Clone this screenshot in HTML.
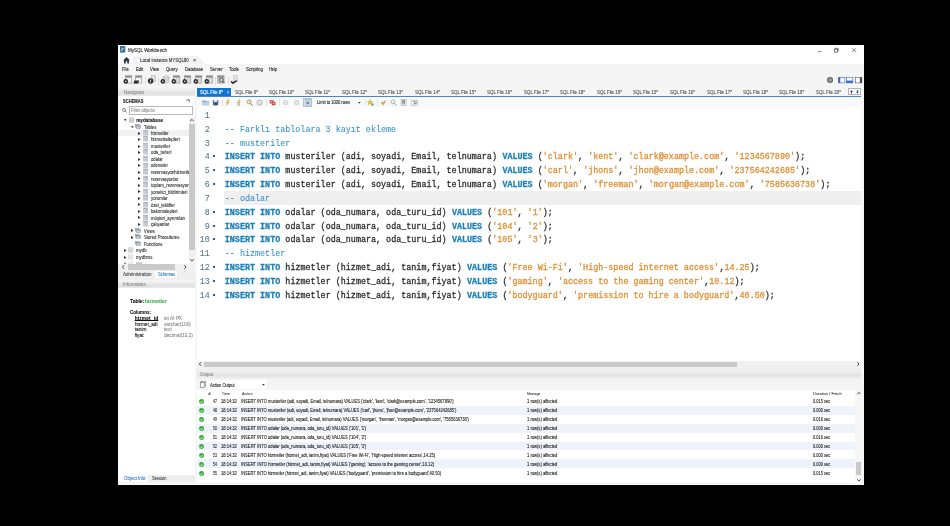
<!DOCTYPE html>
<html lang="tr"><head><meta charset="utf-8"><title>MySQL Workbench</title>
<style>
html,body{margin:0;padding:0;background:#000;width:950px;height:526px;overflow:hidden}
#win{position:absolute;left:118.3px;top:45px;width:745.80px;height:439.8px;background:#f4f4f4;transform:scaleX(1.0);transform-origin:0 0;overflow:hidden;font-family:"Liberation Sans",sans-serif;will-change:transform}
#win div,#win svg,#win span.t{position:absolute}
#win span.t{white-space:pre;display:block}
#win svg{overflow:visible}
</style></head><body>
<div id="win">
<div style="left:-0.30px;top:0.00px;width:746.00px;height:10.00px;background:#fff;"></div>
<svg style="left:1.60px;top:1.20px;width:5.30px;height:6.60px" viewBox="0 0 10 12" preserveAspectRatio="none"><rect x="0" y="0" width="10" height="12" fill="#3b7397"/><path d="M2 9 C3 3 7 2 8.5 5 C6.5 4 4.5 5.5 4 9 Z" fill="#cfe3ef"/></svg>
<span class="t" style="left:9.70px;top:2.78px;font-size:4.87px;line-height:5.84px;color:#1a1a1a;-webkit-text-stroke:0.1px;transform:scaleX(0.9296);transform-origin:0 50%;">MySQL Workbench</span>
<svg style="left:699.50px;top:5.70px;width:3.40px;height:0.70px" viewBox="0 0 3.4 0.7" preserveAspectRatio="none"><rect width="3.4" height="0.7" fill="#666"/></svg>
<svg style="left:715.90px;top:3.40px;width:4.40px;height:4.40px" viewBox="0 0 4.4 4.4" preserveAspectRatio="none"><rect x="0.3" y="1.1" width="3.1" height="3.1" fill="none" stroke="#333" stroke-width="0.6"/><path d="M1.2 1.1V0.3H4.1V3.3H3.4" fill="none" stroke="#333" stroke-width="0.6"/></svg>
<svg style="left:734.30px;top:3.40px;width:4.20px;height:4.40px" viewBox="0 0 4.2 4.4" preserveAspectRatio="none"><path d="M0.2 0.2L4 4.2M4 0.2L0.2 4.2" stroke="#333" stroke-width="0.6" fill="none"/></svg>
<div style="left:-0.30px;top:10.00px;width:746.00px;height:9.30px;background:#fff;"></div>
<svg style="left:15.20px;top:10.80px;width:73.00px;height:8.50px" viewBox="0 0 73 8.5" preserveAspectRatio="none"><path d="M0 8.5V0H64.5L73 8.5Z" fill="#f2f2f2"/></svg>
<svg style="left:4.90px;top:11.80px;width:7.00px;height:6.40px" viewBox="0 0 7 6.4" preserveAspectRatio="none"><path d="M0 3.3L3.5 0L7 3.3H6V6.4H4.2V4.2H2.8V6.4H1V3.3Z" fill="#2b3d5c"/></svg>
<span class="t" style="left:21.60px;top:12.78px;font-size:4.7px;line-height:5.64px;color:#333;-webkit-text-stroke:0.1px;transform:scaleX(0.9201);transform-origin:0 50%;">Local instance MYSQL80</span>
<span class="t" style="left:75.10px;top:12.37px;font-size:5.21px;line-height:6.25px;color:#555;-webkit-text-stroke:0.1px;">×</span>
<div style="left:-0.30px;top:19.30px;width:746.00px;height:23.70px;background:#f5f5f5;"></div>
<span class="t" style="left:3.60px;top:22.38px;font-size:4.7px;line-height:5.64px;color:#222;-webkit-text-stroke:0.1px;transform:scaleX(0.9111);transform-origin:0 50%;">File</span>
<span class="t" style="left:17.60px;top:22.38px;font-size:4.7px;line-height:5.64px;color:#222;-webkit-text-stroke:0.1px;transform:scaleX(0.9013);transform-origin:0 50%;">Edit</span>
<span class="t" style="left:31.90px;top:22.38px;font-size:4.7px;line-height:5.64px;color:#222;-webkit-text-stroke:0.1px;transform:scaleX(0.9106);transform-origin:0 50%;">View</span>
<span class="t" style="left:47.50px;top:22.38px;font-size:4.7px;line-height:5.64px;color:#222;-webkit-text-stroke:0.1px;transform:scaleX(0.9063);transform-origin:0 50%;">Query</span>
<span class="t" style="left:66.50px;top:22.38px;font-size:4.7px;line-height:5.64px;color:#222;-webkit-text-stroke:0.1px;transform:scaleX(0.9046);transform-origin:0 50%;">Database</span>
<span class="t" style="left:91.60px;top:22.38px;font-size:4.7px;line-height:5.64px;color:#222;-webkit-text-stroke:0.1px;transform:scaleX(0.9102);transform-origin:0 50%;">Server</span>
<span class="t" style="left:111.20px;top:22.38px;font-size:4.7px;line-height:5.64px;color:#222;-webkit-text-stroke:0.1px;transform:scaleX(0.9114);transform-origin:0 50%;">Tools</span>
<span class="t" style="left:128.10px;top:22.38px;font-size:4.7px;line-height:5.64px;color:#222;-webkit-text-stroke:0.1px;transform:scaleX(0.9296);transform-origin:0 50%;">Scripting</span>
<span class="t" style="left:151.40px;top:22.38px;font-size:4.7px;line-height:5.64px;color:#222;-webkit-text-stroke:0.1px;transform:scaleX(0.8483);transform-origin:0 50%;">Help</span>
<svg style="left:4.50px;top:30.40px;width:10.00px;height:10.00px" viewBox="0 0 10 10" preserveAspectRatio="none"><rect x="2.4" y="0.8" width="6.4" height="7.3" fill="#f4f4f4" stroke="#8a8a8a" stroke-width="0.6"/><rect x="2.4" y="0.8" width="6.4" height="1.9" fill="#8f8f8f"/><circle cx="2.8" cy="6.4" r="2.3" fill="#2c2c2c"/><circle cx="2.8" cy="6.4" r="0.8" fill="#d8d8d8"/></svg>
<svg style="left:15.10px;top:30.40px;width:10.00px;height:10.00px" viewBox="0 0 10 10" preserveAspectRatio="none"><rect x="2.4" y="0.8" width="6.4" height="7.3" fill="#f4f4f4" stroke="#8a8a8a" stroke-width="0.6"/><rect x="2.4" y="0.8" width="6.4" height="1.9" fill="#8f8f8f"/><path d="M0.4 8.4L1.4 5.4H6.2L5 8.4Z" fill="#2e2e2e"/></svg>
<svg style="left:28.70px;top:30.40px;width:10.00px;height:10.00px" viewBox="0 0 10 10" preserveAspectRatio="none"><rect x="4" y="0.6" width="4.6" height="6.4" fill="#dcdcdc" stroke="#b5b5b5" stroke-width="0.5"/><circle cx="3.6" cy="6" r="2.7" fill="#2a2a2a"/><path d="M3.9 4.4L3.2 7.6" stroke="#f0f0f0" stroke-width="0.9"/></svg>
<svg style="left:42.10px;top:30.40px;width:10.00px;height:10.00px" viewBox="0 0 10 10" preserveAspectRatio="none"><path d="M3 2V7C3 8.2 8.8 8.2 8.8 7V2Z" fill="#e3e3e3" stroke="#9a9a9a" stroke-width="0.5"/><ellipse cx="5.9" cy="2" rx="2.9" ry="1.1" fill="#f1f1f1" stroke="#9a9a9a" stroke-width="0.5"/><path d="M3 4.4C3 5.5 8.8 5.5 8.8 4.4" fill="none" stroke="#aaa" stroke-width="0.5"/><circle cx="2.8" cy="6.4" r="2.3" fill="#2c2c2c"/><circle cx="2.8" cy="6.4" r="0.8" fill="#d8d8d8"/></svg>
<svg style="left:53.20px;top:30.40px;width:10.00px;height:10.00px" viewBox="0 0 10 10" preserveAspectRatio="none"><rect x="2.4" y="0.8" width="6.4" height="7.3" fill="#f4f4f4" stroke="#8a8a8a" stroke-width="0.6"/><rect x="2.4" y="0.8" width="6.4" height="1.9" fill="#8f8f8f"/><path d="M5.6 2.7V8.1M7.2 2.7V8.1" stroke="#a8a8a8" stroke-width="0.6"/><circle cx="2.8" cy="6.4" r="2.3" fill="#2c2c2c"/><circle cx="2.8" cy="6.4" r="0.8" fill="#d8d8d8"/></svg>
<svg style="left:64.00px;top:30.40px;width:10.00px;height:10.00px" viewBox="0 0 10 10" preserveAspectRatio="none"><rect x="2.4" y="0.8" width="6.4" height="7.3" fill="#f4f4f4" stroke="#8a8a8a" stroke-width="0.6"/><rect x="2.4" y="0.8" width="6.4" height="1.9" fill="#8f8f8f"/><path d="M5.6 2.7V8.1M7.2 2.7V8.1" stroke="#a8a8a8" stroke-width="0.6"/><circle cx="2.8" cy="6.4" r="2.3" fill="#2c2c2c"/><circle cx="2.8" cy="6.4" r="0.8" fill="#d8d8d8"/></svg>
<svg style="left:74.80px;top:30.40px;width:10.00px;height:10.00px" viewBox="0 0 10 10" preserveAspectRatio="none"><rect x="2.4" y="0.8" width="6.4" height="7.3" fill="#f4f4f4" stroke="#8a8a8a" stroke-width="0.6"/><rect x="2.4" y="0.8" width="6.4" height="1.9" fill="#8f8f8f"/><path d="M5.6 2.7V8.1M7.2 2.7V8.1" stroke="#a8a8a8" stroke-width="0.6"/><circle cx="2.8" cy="6.4" r="2.3" fill="#2c2c2c"/><circle cx="2.8" cy="6.4" r="0.8" fill="#d8d8d8"/></svg>
<svg style="left:85.70px;top:30.40px;width:10.00px;height:10.00px" viewBox="0 0 10 10" preserveAspectRatio="none"><rect x="2.4" y="0.8" width="6.4" height="7.3" fill="#f4f4f4" stroke="#8a8a8a" stroke-width="0.6"/><rect x="2.4" y="0.8" width="6.4" height="1.9" fill="#8f8f8f"/><path d="M5.6 2.7V8.1M7.2 2.7V8.1" stroke="#a8a8a8" stroke-width="0.6"/><circle cx="2.8" cy="6.4" r="2.3" fill="#2c2c2c"/><circle cx="2.8" cy="6.4" r="0.8" fill="#d8d8d8"/></svg>
<svg style="left:99.30px;top:30.40px;width:10.00px;height:10.00px" viewBox="0 0 10 10" preserveAspectRatio="none"><rect x="0.7" y="0.8" width="6.4" height="7.3" fill="#b9b9b9" stroke="#8a8a8a" stroke-width="0.5"/><rect x="0.7" y="0.8" width="6.4" height="1.7" fill="#8c8c8c"/><circle cx="4.4" cy="5" r="1.7" fill="#efefef" stroke="#3a3a3a" stroke-width="0.8"/><path d="M5.6 6.2L7.4 8" stroke="#3a3a3a" stroke-width="1"/></svg>
<svg style="left:112.30px;top:30.40px;width:10.00px;height:10.00px" viewBox="0 0 10 10" preserveAspectRatio="none"><rect x="3.4" y="0.6" width="4.2" height="6" fill="#e2e2e2" stroke="#bcbcbc" stroke-width="0.5"/><path d="M1 6.4L3 8.2L6.8 5.6" stroke="#333" stroke-width="1.6" fill="none"/></svg>
<div style="left:27.00px;top:32.00px;width:0.60px;height:7.50px;background:#dcdcdc;"></div>
<div style="left:40.30px;top:32.00px;width:0.60px;height:7.50px;background:#dcdcdc;"></div>
<div style="left:97.00px;top:32.00px;width:0.60px;height:7.50px;background:#dcdcdc;"></div>
<div style="left:109.90px;top:32.00px;width:0.60px;height:7.50px;background:#dcdcdc;"></div>
<svg style="left:709.10px;top:32.00px;width:6.00px;height:6.00px" viewBox="0 0 6 6" preserveAspectRatio="none"><circle cx="3" cy="3" r="3" fill="#575757"/><circle cx="3" cy="3" r="1.5" fill="none" stroke="#d0d0d0" stroke-width="0.6"/><path d="M3 0.6V5.4M0.6 3H5.4" stroke="#d0d0d0" stroke-width="0.4"/></svg>
<svg style="left:720.10px;top:32.00px;width:7.20px;height:6.20px" viewBox="0 0 7.2 6.2" preserveAspectRatio="none"><rect x="0.3" y="0.3" width="6.6" height="5.6" fill="#fff" stroke="#3a66c4" stroke-width="0.6"/><rect x="0.3" y="0.3" width="2" height="5.6" fill="#3a66c4"/></svg>
<svg style="left:728.30px;top:32.00px;width:7.20px;height:6.20px" viewBox="0 0 7.2 6.2" preserveAspectRatio="none"><rect x="0.3" y="0.3" width="6.6" height="5.6" fill="#fff" stroke="#3a66c4" stroke-width="0.6"/><rect x="0.3" y="3.6" width="6.6" height="2.3" fill="#3a66c4"/></svg>
<svg style="left:736.50px;top:32.00px;width:7.20px;height:6.20px" viewBox="0 0 7.2 6.2" preserveAspectRatio="none"><rect x="0.3" y="0.3" width="6.6" height="5.6" fill="#fff" stroke="#555" stroke-width="0.6"/><rect x="4.9" y="0.3" width="2" height="5.6" fill="#444"/></svg>
<div style="left:-0.30px;top:43.00px;width:77.30px;height:8.60px;background:linear-gradient(#f4f4f4,#e2e2e2 55%,#e2e2e2 70%,#f4f4f4);"></div>
<span class="t" style="left:5.80px;top:44.78px;font-size:4.7px;line-height:5.64px;color:#8c8c8c;-webkit-text-stroke:0.1px;letter-spacing:0.043px;">Navigator</span>
<div style="left:-0.30px;top:51.00px;width:77.30px;height:174.60px;background:#fff;"></div>
<span class="t" style="left:4.90px;top:54.18px;font-size:4.54px;line-height:5.45px;color:#1a1a1a;font-weight:700;-webkit-text-stroke:0.1px;transform:scaleX(0.9030);transform-origin:0 50%;">SCHEMAS</span>
<svg style="left:67.90px;top:54.20px;width:4.40px;height:3.80px" viewBox="0 0 5.5 4.6" preserveAspectRatio="none"><path d="M0.6 2.6A2 1.7 0 1 1 3.2 4" fill="none" stroke="#555" stroke-width="0.7"/><path d="M2.4 0.6L4.8 1L3.6 2.6Z" fill="#555"/></svg>
<svg style="left:3.70px;top:63.00px;width:5.00px;height:4.60px" viewBox="0 0 5 4.6" preserveAspectRatio="none"><circle cx="2" cy="1.9" r="1.5" fill="none" stroke="#555" stroke-width="0.7"/><path d="M3 3L4.6 4.4" stroke="#555" stroke-width="0.8"/></svg>
<div style="left:11.00px;top:61.00px;width:63.70px;height:8.60px;background:#fff;box-sizing:border-box;border:1px solid #b9b9b9;"></div>
<span class="t" style="left:12.90px;top:63.08px;font-size:4.54px;line-height:5.45px;color:#8e8e8e;-webkit-text-stroke:0.1px;transform:scaleX(0.9248);transform-origin:0 50%;">Filter objects</span>
<div style="left:-0.30px;top:84.90px;width:71.20px;height:6.50px;background:#f1f1f1;"></div>
<svg style="left:5.60px;top:74.30px;width:2.60px;height:2.20px" viewBox="0 0 2.6 2.2" preserveAspectRatio="none"><path d="M0 0H2.6L1.3 2.2Z" fill="#444"/></svg>
<svg style="left:10.70px;top:72.20px;width:5.20px;height:6.00px" viewBox="0 0 5.2 6" preserveAspectRatio="none"><g opacity="1.0"><path d="M0.3 1.2V4.8C0.3 5.7 4.9 5.7 4.9 4.8V1.2Z" fill="#d6d6d6" stroke="#b0b0b0" stroke-width="0.5"/><ellipse cx="2.6" cy="1.2" rx="2.3" ry="0.9" fill="#ececec" stroke="#b0b0b0" stroke-width="0.5"/><path d="M0.3 3C0.3 3.9 4.9 3.9 4.9 3" fill="none" stroke="#bbb" stroke-width="0.4"/></g></svg>
<span class="t" style="left:18.20px;top:72.93px;font-size:4.62px;line-height:5.54px;color:#111;font-weight:700;-webkit-text-stroke:0.1px;letter-spacing:0.029px;">mydatabase</span>
<svg style="left:13.10px;top:80.70px;width:2.60px;height:2.20px" viewBox="0 0 2.6 2.2" preserveAspectRatio="none"><path d="M0 0H2.6L1.3 2.2Z" fill="#444"/></svg>
<svg style="left:16.90px;top:78.60px;width:6.00px;height:5.40px" viewBox="0 0 6 5.4" preserveAspectRatio="none"><rect x="0.3" y="0.3" width="3.8" height="2.8" fill="#c3c8d0" stroke="#7f8792" stroke-width="0.5"/><rect x="1.6" y="1.5" width="4.1" height="3" fill="#dfe3e8" stroke="#7f8792" stroke-width="0.5"/><path d="M1.6 2.5H5.7M3 1.5V4.5M4.4 1.5V4.5" stroke="#8d95a0" stroke-width="0.4"/></svg>
<span class="t" style="left:25.90px;top:79.53px;font-size:4.45px;line-height:5.34px;color:#333;-webkit-text-stroke:0.1px;transform:scaleX(0.9640);transform-origin:0 50%;">Tables</span>
<svg style="left:20.10px;top:86.50px;width:2.60px;height:3.00px" viewBox="0 0 2.6 3" preserveAspectRatio="none"><path d="M0 0L2.6 1.5L0 3Z" fill="#333"/></svg>
<svg style="left:25.00px;top:84.90px;width:5.20px;height:5.80px" viewBox="0 0 5.2 5.8" preserveAspectRatio="none"><rect x="0.2" y="0.2" width="4.8" height="5.4" fill="#cfd2db"/><rect x="0.2" y="0.2" width="4.8" height="1.3" fill="#a9adba"/><path d="M0.2 2.6H5M0.2 3.7H5M0.2 4.8H5" stroke="#b3b6c2" stroke-width="0.45"/><path d="M1.9 1.5V5.6" stroke="#e3e5ea" stroke-width="0.4"/></svg>
<span class="t" style="left:32.90px;top:85.83px;font-size:4.45px;line-height:5.34px;color:#333;-webkit-text-stroke:0.1px;transform:scaleX(0.9749);transform-origin:0 50%;">hizmetler</span>
<svg style="left:20.10px;top:93.03px;width:2.60px;height:3.00px" viewBox="0 0 2.6 3" preserveAspectRatio="none"><path d="M0 0L2.6 1.5L0 3Z" fill="#333"/></svg>
<svg style="left:25.00px;top:91.43px;width:5.20px;height:5.80px" viewBox="0 0 5.2 5.8" preserveAspectRatio="none"><rect x="0.2" y="0.2" width="4.8" height="5.4" fill="#cfd2db"/><rect x="0.2" y="0.2" width="4.8" height="1.3" fill="#a9adba"/><path d="M0.2 2.6H5M0.2 3.7H5M0.2 4.8H5" stroke="#b3b6c2" stroke-width="0.45"/><path d="M1.9 1.5V5.6" stroke="#e3e5ea" stroke-width="0.4"/></svg>
<span class="t" style="left:32.90px;top:92.36px;font-size:4.45px;line-height:5.34px;color:#333;-webkit-text-stroke:0.1px;letter-spacing:0.014px;">hizmettalepleri</span>
<svg style="left:20.10px;top:99.56px;width:2.60px;height:3.00px" viewBox="0 0 2.6 3" preserveAspectRatio="none"><path d="M0 0L2.6 1.5L0 3Z" fill="#333"/></svg>
<svg style="left:25.00px;top:97.96px;width:5.20px;height:5.80px" viewBox="0 0 5.2 5.8" preserveAspectRatio="none"><rect x="0.2" y="0.2" width="4.8" height="5.4" fill="#cfd2db"/><rect x="0.2" y="0.2" width="4.8" height="1.3" fill="#a9adba"/><path d="M0.2 2.6H5M0.2 3.7H5M0.2 4.8H5" stroke="#b3b6c2" stroke-width="0.45"/><path d="M1.9 1.5V5.6" stroke="#e3e5ea" stroke-width="0.4"/></svg>
<span class="t" style="left:32.90px;top:98.89px;font-size:4.45px;line-height:5.34px;color:#333;-webkit-text-stroke:0.1px;transform:scaleX(0.9829);transform-origin:0 50%;">musteriler</span>
<svg style="left:20.10px;top:106.09px;width:2.60px;height:3.00px" viewBox="0 0 2.6 3" preserveAspectRatio="none"><path d="M0 0L2.6 1.5L0 3Z" fill="#333"/></svg>
<svg style="left:25.00px;top:104.49px;width:5.20px;height:5.80px" viewBox="0 0 5.2 5.8" preserveAspectRatio="none"><rect x="0.2" y="0.2" width="4.8" height="5.4" fill="#cfd2db"/><rect x="0.2" y="0.2" width="4.8" height="1.3" fill="#a9adba"/><path d="M0.2 2.6H5M0.2 3.7H5M0.2 4.8H5" stroke="#b3b6c2" stroke-width="0.45"/><path d="M1.9 1.5V5.6" stroke="#e3e5ea" stroke-width="0.4"/></svg>
<span class="t" style="left:32.90px;top:105.42px;font-size:4.45px;line-height:5.34px;color:#333;-webkit-text-stroke:0.1px;transform:scaleX(0.9702);transform-origin:0 50%;">oda_turleri</span>
<svg style="left:20.10px;top:112.62px;width:2.60px;height:3.00px" viewBox="0 0 2.6 3" preserveAspectRatio="none"><path d="M0 0L2.6 1.5L0 3Z" fill="#333"/></svg>
<svg style="left:25.00px;top:111.02px;width:5.20px;height:5.80px" viewBox="0 0 5.2 5.8" preserveAspectRatio="none"><rect x="0.2" y="0.2" width="4.8" height="5.4" fill="#cfd2db"/><rect x="0.2" y="0.2" width="4.8" height="1.3" fill="#a9adba"/><path d="M0.2 2.6H5M0.2 3.7H5M0.2 4.8H5" stroke="#b3b6c2" stroke-width="0.45"/><path d="M1.9 1.5V5.6" stroke="#e3e5ea" stroke-width="0.4"/></svg>
<span class="t" style="left:32.90px;top:111.95px;font-size:4.45px;line-height:5.34px;color:#333;-webkit-text-stroke:0.1px;transform:scaleX(0.9539);transform-origin:0 50%;">odalar</span>
<svg style="left:20.10px;top:119.15px;width:2.60px;height:3.00px" viewBox="0 0 2.6 3" preserveAspectRatio="none"><path d="M0 0L2.6 1.5L0 3Z" fill="#333"/></svg>
<svg style="left:25.00px;top:117.55px;width:5.20px;height:5.80px" viewBox="0 0 5.2 5.8" preserveAspectRatio="none"><rect x="0.2" y="0.2" width="4.8" height="5.4" fill="#cfd2db"/><rect x="0.2" y="0.2" width="4.8" height="1.3" fill="#a9adba"/><path d="M0.2 2.6H5M0.2 3.7H5M0.2 4.8H5" stroke="#b3b6c2" stroke-width="0.45"/><path d="M1.9 1.5V5.6" stroke="#e3e5ea" stroke-width="0.4"/></svg>
<span class="t" style="left:32.90px;top:118.48px;font-size:4.45px;line-height:5.34px;color:#333;-webkit-text-stroke:0.1px;transform:scaleX(0.9163);transform-origin:0 50%;">odemeler</span>
<svg style="left:20.10px;top:125.68px;width:2.60px;height:3.00px" viewBox="0 0 2.6 3" preserveAspectRatio="none"><path d="M0 0L2.6 1.5L0 3Z" fill="#333"/></svg>
<svg style="left:25.00px;top:124.08px;width:5.20px;height:5.80px" viewBox="0 0 5.2 5.8" preserveAspectRatio="none"><rect x="0.2" y="0.2" width="4.8" height="5.4" fill="#cfd2db"/><rect x="0.2" y="0.2" width="4.8" height="1.3" fill="#a9adba"/><path d="M0.2 2.6H5M0.2 3.7H5M0.2 4.8H5" stroke="#b3b6c2" stroke-width="0.45"/><path d="M1.9 1.5V5.6" stroke="#e3e5ea" stroke-width="0.4"/></svg>
<span class="t" style="left:32.90px;top:125.01px;font-size:4.45px;line-height:5.34px;color:#333;-webkit-text-stroke:0.1px;transform:scaleX(0.9635);transform-origin:0 50%;">rezervasyonhizmetleri</span>
<svg style="left:20.10px;top:132.21px;width:2.60px;height:3.00px" viewBox="0 0 2.6 3" preserveAspectRatio="none"><path d="M0 0L2.6 1.5L0 3Z" fill="#333"/></svg>
<svg style="left:25.00px;top:130.61px;width:5.20px;height:5.80px" viewBox="0 0 5.2 5.8" preserveAspectRatio="none"><rect x="0.2" y="0.2" width="4.8" height="5.4" fill="#cfd2db"/><rect x="0.2" y="0.2" width="4.8" height="1.3" fill="#a9adba"/><path d="M0.2 2.6H5M0.2 3.7H5M0.2 4.8H5" stroke="#b3b6c2" stroke-width="0.45"/><path d="M1.9 1.5V5.6" stroke="#e3e5ea" stroke-width="0.4"/></svg>
<span class="t" style="left:32.90px;top:131.54px;font-size:4.45px;line-height:5.34px;color:#333;-webkit-text-stroke:0.1px;transform:scaleX(0.9320);transform-origin:0 50%;">rezervasyonlar</span>
<svg style="left:20.10px;top:138.74px;width:2.60px;height:3.00px" viewBox="0 0 2.6 3" preserveAspectRatio="none"><path d="M0 0L2.6 1.5L0 3Z" fill="#333"/></svg>
<svg style="left:25.00px;top:137.14px;width:5.20px;height:5.80px" viewBox="0 0 5.2 5.8" preserveAspectRatio="none"><rect x="0.2" y="0.2" width="4.8" height="5.4" fill="#cfd2db"/><rect x="0.2" y="0.2" width="4.8" height="1.3" fill="#a9adba"/><path d="M0.2 2.6H5M0.2 3.7H5M0.2 4.8H5" stroke="#b3b6c2" stroke-width="0.45"/><path d="M1.9 1.5V5.6" stroke="#e3e5ea" stroke-width="0.4"/></svg>
<span class="t" style="left:32.90px;top:138.07px;font-size:4.45px;line-height:5.34px;color:#333;-webkit-text-stroke:0.1px;transform:scaleX(0.9641);transform-origin:0 50%;">toplam_rezervasyonlar</span>
<svg style="left:20.10px;top:145.27px;width:2.60px;height:3.00px" viewBox="0 0 2.6 3" preserveAspectRatio="none"><path d="M0 0L2.6 1.5L0 3Z" fill="#333"/></svg>
<svg style="left:25.00px;top:143.67px;width:5.20px;height:5.80px" viewBox="0 0 5.2 5.8" preserveAspectRatio="none"><rect x="0.2" y="0.2" width="4.8" height="5.4" fill="#cfd2db"/><rect x="0.2" y="0.2" width="4.8" height="1.3" fill="#a9adba"/><path d="M0.2 2.6H5M0.2 3.7H5M0.2 4.8H5" stroke="#b3b6c2" stroke-width="0.45"/><path d="M1.9 1.5V5.6" stroke="#e3e5ea" stroke-width="0.4"/></svg>
<span class="t" style="left:32.90px;top:144.60px;font-size:4.45px;line-height:5.34px;color:#333;-webkit-text-stroke:0.1px;transform:scaleX(0.9736);transform-origin:0 50%;">yonetici_bildirimleri</span>
<svg style="left:20.10px;top:151.80px;width:2.60px;height:3.00px" viewBox="0 0 2.6 3" preserveAspectRatio="none"><path d="M0 0L2.6 1.5L0 3Z" fill="#333"/></svg>
<svg style="left:25.00px;top:150.20px;width:5.20px;height:5.80px" viewBox="0 0 5.2 5.8" preserveAspectRatio="none"><rect x="0.2" y="0.2" width="4.8" height="5.4" fill="#cfd2db"/><rect x="0.2" y="0.2" width="4.8" height="1.3" fill="#a9adba"/><path d="M0.2 2.6H5M0.2 3.7H5M0.2 4.8H5" stroke="#b3b6c2" stroke-width="0.45"/><path d="M1.9 1.5V5.6" stroke="#e3e5ea" stroke-width="0.4"/></svg>
<span class="t" style="left:32.90px;top:151.13px;font-size:4.45px;line-height:5.34px;color:#333;-webkit-text-stroke:0.1px;transform:scaleX(0.9590);transform-origin:0 50%;">yorumlar</span>
<svg style="left:20.10px;top:158.33px;width:2.60px;height:3.00px" viewBox="0 0 2.6 3" preserveAspectRatio="none"><path d="M0 0L2.6 1.5L0 3Z" fill="#333"/></svg>
<svg style="left:25.00px;top:156.73px;width:5.20px;height:5.80px" viewBox="0 0 5.2 5.8" preserveAspectRatio="none"><rect x="0.2" y="0.2" width="4.8" height="5.4" fill="#cfd2db"/><rect x="0.2" y="0.2" width="4.8" height="1.3" fill="#a9adba"/><path d="M0.2 2.6H5M0.2 3.7H5M0.2 4.8H5" stroke="#b3b6c2" stroke-width="0.45"/><path d="M1.9 1.5V5.6" stroke="#e3e5ea" stroke-width="0.4"/></svg>
<span class="t" style="left:32.90px;top:157.66px;font-size:4.45px;line-height:5.34px;color:#333;-webkit-text-stroke:0.1px;transform:scaleX(0.9703);transform-origin:0 50%;">özel_teklifler</span>
<svg style="left:20.10px;top:164.86px;width:2.60px;height:3.00px" viewBox="0 0 2.6 3" preserveAspectRatio="none"><path d="M0 0L2.6 1.5L0 3Z" fill="#333"/></svg>
<svg style="left:25.00px;top:163.26px;width:5.20px;height:5.80px" viewBox="0 0 5.2 5.8" preserveAspectRatio="none"><rect x="0.2" y="0.2" width="4.8" height="5.4" fill="#cfd2db"/><rect x="0.2" y="0.2" width="4.8" height="1.3" fill="#a9adba"/><path d="M0.2 2.6H5M0.2 3.7H5M0.2 4.8H5" stroke="#b3b6c2" stroke-width="0.45"/><path d="M1.9 1.5V5.6" stroke="#e3e5ea" stroke-width="0.4"/></svg>
<span class="t" style="left:32.90px;top:164.19px;font-size:4.45px;line-height:5.34px;color:#333;-webkit-text-stroke:0.1px;transform:scaleX(0.9602);transform-origin:0 50%;">bakımtalepleri</span>
<svg style="left:20.10px;top:171.39px;width:2.60px;height:3.00px" viewBox="0 0 2.6 3" preserveAspectRatio="none"><path d="M0 0L2.6 1.5L0 3Z" fill="#333"/></svg>
<svg style="left:25.00px;top:169.79px;width:5.20px;height:5.80px" viewBox="0 0 5.2 5.8" preserveAspectRatio="none"><rect x="0.2" y="0.2" width="4.8" height="5.4" fill="#cfd2db"/><rect x="0.2" y="0.2" width="4.8" height="1.3" fill="#a9adba"/><path d="M0.2 2.6H5M0.2 3.7H5M0.2 4.8H5" stroke="#b3b6c2" stroke-width="0.45"/><path d="M1.9 1.5V5.6" stroke="#e3e5ea" stroke-width="0.4"/></svg>
<span class="t" style="left:32.90px;top:170.72px;font-size:4.45px;line-height:5.34px;color:#333;-webkit-text-stroke:0.1px;transform:scaleX(0.9604);transform-origin:0 50%;">müşteri_ayrıntıları</span>
<svg style="left:20.10px;top:177.92px;width:2.60px;height:3.00px" viewBox="0 0 2.6 3" preserveAspectRatio="none"><path d="M0 0L2.6 1.5L0 3Z" fill="#333"/></svg>
<svg style="left:25.00px;top:176.32px;width:5.20px;height:5.80px" viewBox="0 0 5.2 5.8" preserveAspectRatio="none"><rect x="0.2" y="0.2" width="4.8" height="5.4" fill="#cfd2db"/><rect x="0.2" y="0.2" width="4.8" height="1.3" fill="#a9adba"/><path d="M0.2 2.6H5M0.2 3.7H5M0.2 4.8H5" stroke="#b3b6c2" stroke-width="0.45"/><path d="M1.9 1.5V5.6" stroke="#e3e5ea" stroke-width="0.4"/></svg>
<span class="t" style="left:32.90px;top:177.25px;font-size:4.45px;line-height:5.34px;color:#333;-webkit-text-stroke:0.1px;transform:scaleX(0.9556);transform-origin:0 50%;">çalışanlar</span>
<svg style="left:13.10px;top:184.40px;width:2.60px;height:3.00px" viewBox="0 0 2.6 3" preserveAspectRatio="none"><path d="M0 0L2.6 1.5L0 3Z" fill="#333"/></svg>
<svg style="left:16.50px;top:182.70px;width:6.00px;height:5.40px" viewBox="0 0 6 5.4" preserveAspectRatio="none"><rect x="0.3" y="0.3" width="3.8" height="2.8" fill="#c3c8d0" stroke="#7f8792" stroke-width="0.5"/><rect x="1.6" y="1.5" width="4.1" height="3" fill="#dfe3e8" stroke="#7f8792" stroke-width="0.5"/><path d="M1.6 2.5H5.7M3 1.5V4.5M4.4 1.5V4.5" stroke="#8d95a0" stroke-width="0.4"/></svg>
<span class="t" style="left:25.90px;top:183.73px;font-size:4.45px;line-height:5.34px;color:#333;-webkit-text-stroke:0.1px;transform:scaleX(0.9160);transform-origin:0 50%;">Views</span>
<svg style="left:13.10px;top:190.90px;width:2.60px;height:3.00px" viewBox="0 0 2.6 3" preserveAspectRatio="none"><path d="M0 0L2.6 1.5L0 3Z" fill="#333"/></svg>
<svg style="left:16.50px;top:189.20px;width:6.00px;height:5.40px" viewBox="0 0 6 5.4" preserveAspectRatio="none"><rect x="0.3" y="0.3" width="3.8" height="2.8" fill="#c3c8d0" stroke="#7f8792" stroke-width="0.5"/><rect x="1.6" y="1.5" width="4.1" height="3" fill="#dfe3e8" stroke="#7f8792" stroke-width="0.5"/><path d="M1.6 2.5H5.7M3 1.5V4.5M4.4 1.5V4.5" stroke="#8d95a0" stroke-width="0.4"/></svg>
<span class="t" style="left:25.90px;top:190.23px;font-size:4.45px;line-height:5.34px;color:#333;-webkit-text-stroke:0.1px;transform:scaleX(0.9540);transform-origin:0 50%;">Stored Procedures</span>
<svg style="left:16.50px;top:195.70px;width:6.00px;height:5.40px" viewBox="0 0 6 5.4" preserveAspectRatio="none"><rect x="0.3" y="0.3" width="3.8" height="2.8" fill="#c3c8d0" stroke="#7f8792" stroke-width="0.5"/><rect x="1.6" y="1.5" width="4.1" height="3" fill="#dfe3e8" stroke="#7f8792" stroke-width="0.5"/><path d="M1.6 2.5H5.7M3 1.5V4.5M4.4 1.5V4.5" stroke="#8d95a0" stroke-width="0.4"/></svg>
<span class="t" style="left:25.90px;top:196.73px;font-size:4.45px;line-height:5.34px;color:#333;-webkit-text-stroke:0.1px;transform:scaleX(0.9537);transform-origin:0 50%;">Functions</span>
<svg style="left:5.50px;top:204.00px;width:2.60px;height:3.00px" viewBox="0 0 2.6 3" preserveAspectRatio="none"><path d="M0 0L2.6 1.5L0 3Z" fill="#333"/></svg>
<svg style="left:10.30px;top:202.20px;width:5.20px;height:6.00px" viewBox="0 0 5.2 6" preserveAspectRatio="none"><g opacity="0.8"><path d="M0.3 1.2V4.8C0.3 5.7 4.9 5.7 4.9 4.8V1.2Z" fill="#d6d6d6" stroke="#b0b0b0" stroke-width="0.5"/><ellipse cx="2.6" cy="1.2" rx="2.3" ry="0.9" fill="#ececec" stroke="#b0b0b0" stroke-width="0.5"/><path d="M0.3 3C0.3 3.9 4.9 3.9 4.9 3" fill="none" stroke="#bbb" stroke-width="0.4"/></g></svg>
<span class="t" style="left:18.20px;top:203.33px;font-size:4.45px;line-height:5.34px;color:#333;-webkit-text-stroke:0.1px;transform:scaleX(0.9741);transform-origin:0 50%;">mydb</span>
<svg style="left:5.50px;top:210.50px;width:2.60px;height:3.00px" viewBox="0 0 2.6 3" preserveAspectRatio="none"><path d="M0 0L2.6 1.5L0 3Z" fill="#333"/></svg>
<svg style="left:10.30px;top:208.80px;width:5.20px;height:6.00px" viewBox="0 0 5.2 6" preserveAspectRatio="none"><g opacity="0.55"><path d="M0.3 1.2V4.8C0.3 5.7 4.9 5.7 4.9 4.8V1.2Z" fill="#d6d6d6" stroke="#b0b0b0" stroke-width="0.5"/><ellipse cx="2.6" cy="1.2" rx="2.3" ry="0.9" fill="#ececec" stroke="#b0b0b0" stroke-width="0.5"/><path d="M0.3 3C0.3 3.9 4.9 3.9 4.9 3" fill="none" stroke="#bbb" stroke-width="0.4"/></g></svg>
<span class="t" style="left:18.20px;top:209.83px;font-size:4.45px;line-height:5.34px;color:#333;-webkit-text-stroke:0.1px;transform:scaleX(0.9754);transform-origin:0 50%;">mydbms</span>
<svg style="left:5.50px;top:216.90px;width:2.60px;height:3.00px" viewBox="0 0 2.6 3" preserveAspectRatio="none"><path d="M0 0L2.6 1.5L0 3Z" fill="#888"/></svg>
<svg style="left:10.30px;top:215.60px;width:5.20px;height:6.00px" viewBox="0 0 5.2 6" preserveAspectRatio="none"><g opacity="0.4"><path d="M0.3 1.2V4.8C0.3 5.7 4.9 5.7 4.9 4.8V1.2Z" fill="#d6d6d6" stroke="#b0b0b0" stroke-width="0.5"/><ellipse cx="2.6" cy="1.2" rx="2.3" ry="0.9" fill="#ececec" stroke="#b0b0b0" stroke-width="0.5"/><path d="M0.3 3C0.3 3.9 4.9 3.9 4.9 3" fill="none" stroke="#bbb" stroke-width="0.4"/></g></svg>
<span class="t" style="left:18.20px;top:216.43px;font-size:4.45px;line-height:5.34px;color:#999;-webkit-text-stroke:0.1px;transform:scaleX(0.9588);transform-origin:0 50%;">sys</span>
<div style="left:70.90px;top:72.00px;width:6.10px;height:147.00px;background:#f0f0f0;"></div>
<div style="left:71.20px;top:79.00px;width:5.40px;height:126.30px;background:#c9c9c9;"></div>
<svg style="left:71.70px;top:74.20px;width:4.00px;height:2.40px" viewBox="0 0 4 2.4" preserveAspectRatio="none"><path d="M0.2 2.2L2 0.4L3.8 2.2" fill="none" stroke="#2a2a2a" stroke-width="0.85"/></svg>
<svg style="left:71.70px;top:213.60px;width:4.00px;height:2.40px" viewBox="0 0 4 2.4" preserveAspectRatio="none"><path d="M0.2 0.3L2 2.1L3.8 0.3" fill="none" stroke="#2a2a2a" stroke-width="0.85"/></svg>
<div style="left:-0.30px;top:219.00px;width:77.30px;height:6.60px;background:#f0f0f0;"></div>
<div style="left:9.50px;top:219.30px;width:47.70px;height:5.50px;background:#c9c9c9;"></div>
<svg style="left:4.30px;top:220.00px;width:2.40px;height:4.00px" viewBox="0 0 2.4 4" preserveAspectRatio="none"><path d="M2 0.2L0.4 2L2 3.8" fill="none" stroke="#2a2a2a" stroke-width="0.85"/></svg>
<svg style="left:65.90px;top:220.00px;width:2.40px;height:4.00px" viewBox="0 0 2.4 4" preserveAspectRatio="none"><path d="M0.4 0.2L2 2L0.4 3.8" fill="none" stroke="#2a2a2a" stroke-width="0.85"/></svg>
<div style="left:-0.30px;top:225.60px;width:77.30px;height:9.90px;background:#efefef;"></div>
<div style="left:37.20px;top:225.60px;width:22.30px;height:7.00px;background:#fff;"></div>
<span class="t" style="left:5.40px;top:226.68px;font-size:4.7px;line-height:5.64px;color:#4a4a4a;-webkit-text-stroke:0.1px;transform:scaleX(0.9637);transform-origin:0 50%;">Administration</span>
<span class="t" style="left:39.90px;top:226.68px;font-size:4.7px;line-height:5.64px;color:#2f7fd0;-webkit-text-stroke:0.1px;transform:scaleX(0.8779);transform-origin:0 50%;">Schemas</span>
<div style="left:-0.30px;top:235.50px;width:77.30px;height:8.10px;background:linear-gradient(#f4f4f4,#e2e2e2 55%,#e2e2e2 70%,#f4f4f4);"></div>
<span class="t" style="left:5.40px;top:237.28px;font-size:4.7px;line-height:5.64px;color:#8c8c8c;-webkit-text-stroke:0.1px;transform:scaleX(0.9782);transform-origin:0 50%;">Information</span>
<div style="left:-0.30px;top:243.30px;width:77.30px;height:187.00px;background:#fff;"></div>
<span class="t" style="left:11.60px;top:254.12px;font-size:4.96px;line-height:5.95px;color:#111;font-weight:700;-webkit-text-stroke:0.1px;transform:scaleX(0.9973);transform-origin:0 50%;">Table:</span>
<span class="t" style="left:26.90px;top:254.12px;font-size:4.96px;line-height:5.95px;color:#3fae4a;font-weight:700;-webkit-text-stroke:0.1px;transform:scaleX(0.9920);transform-origin:0 50%;">hizmetler</span>
<span class="t" style="left:11.60px;top:265.42px;font-size:4.96px;line-height:5.95px;color:#111;font-weight:700;-webkit-text-stroke:0.1px;transform:scaleX(0.9182);transform-origin:0 50%;">Columns:</span>
<span class="t" style="left:16.70px;top:271.23px;font-size:4.79px;line-height:5.75px;color:#111;font-weight:700;-webkit-text-stroke:0.1px;letter-spacing:0.168px;text-decoration:underline;text-decoration-thickness:0.6px;text-underline-offset:0.3px;">hizmet_id</span>
<span class="t" style="left:45.70px;top:271.23px;font-size:4.79px;line-height:5.75px;color:#8a8a8a;-webkit-text-stroke:0.1px;letter-spacing:0.036px;">int AI PK</span>
<span class="t" style="left:16.70px;top:276.70px;font-size:4.79px;line-height:5.75px;color:#111;-webkit-text-stroke:0.1px;transform:scaleX(0.9713);transform-origin:0 50%;">hizmet_adi</span>
<span class="t" style="left:45.70px;top:276.70px;font-size:4.79px;line-height:5.75px;color:#8a8a8a;-webkit-text-stroke:0.1px;transform:scaleX(0.9906);transform-origin:0 50%;">varchar(100)</span>
<span class="t" style="left:16.70px;top:282.17px;font-size:4.79px;line-height:5.75px;color:#111;-webkit-text-stroke:0.1px;letter-spacing:0.017px;">tanim</span>
<span class="t" style="left:45.70px;top:282.17px;font-size:4.79px;line-height:5.75px;color:#8a8a8a;-webkit-text-stroke:0.1px;letter-spacing:0.170px;">text</span>
<span class="t" style="left:16.70px;top:287.64px;font-size:4.79px;line-height:5.75px;color:#111;-webkit-text-stroke:0.1px;letter-spacing:0.003px;">fiyat</span>
<span class="t" style="left:45.70px;top:287.64px;font-size:4.79px;line-height:5.75px;color:#8a8a8a;-webkit-text-stroke:0.1px;transform:scaleX(0.9993);transform-origin:0 50%;">decimal(10,2)</span>
<div style="left:-0.30px;top:430.30px;width:77.30px;height:7.70px;background:#efefef;"></div>
<div style="left:-0.30px;top:438.00px;width:77.30px;height:2.00px;background:#fafafa;"></div>
<div style="left:-0.30px;top:430.30px;width:30.00px;height:6.90px;background:#fff;"></div>
<span class="t" style="left:5.60px;top:431.38px;font-size:4.7px;line-height:5.64px;color:#2f7fd0;-webkit-text-stroke:0.1px;transform:scaleX(0.9503);transform-origin:0 50%;">Object Info</span>
<span class="t" style="left:33.60px;top:431.38px;font-size:4.7px;line-height:5.64px;color:#444;-webkit-text-stroke:0.1px;transform:scaleX(0.8791);transform-origin:0 50%;">Session</span>
<div style="left:77.00px;top:43.00px;width:1.90px;height:397.00px;background:#f6f6f6;"></div>
<div style="left:78.90px;top:43.00px;width:666.80px;height:8.00px;background:#f5f5f5;"></div>
<div style="left:78.90px;top:50.70px;width:663.80px;height:1.00px;background:#4687cb;"></div>
<div style="left:79.10px;top:43.00px;width:34.20px;height:8.30px;background:#0f74d1;"></div>
<span class="t" style="left:81.50px;top:44.78px;font-size:4.7px;line-height:5.64px;color:#fff;-webkit-text-stroke:0.1px;transform:scaleX(0.9640);transform-origin:0 50%;">SQL File 8*</span>
<span class="t" style="left:108.70px;top:44.68px;font-size:4.7px;line-height:5.64px;color:#9cc8f2;-webkit-text-stroke:0.1px;">×</span>
<span class="t" style="left:116.90px;top:44.78px;font-size:4.7px;line-height:5.64px;color:#505050;-webkit-text-stroke:0.1px;transform:scaleX(0.9640);transform-origin:0 50%;">SQL File 9*</span>
<span class="t" style="left:151.00px;top:44.78px;font-size:4.7px;line-height:5.64px;color:#505050;-webkit-text-stroke:0.1px;transform:scaleX(0.9444);transform-origin:0 50%;">SQL File 10*</span>
<span class="t" style="left:186.80px;top:44.78px;font-size:4.7px;line-height:5.64px;color:#505050;-webkit-text-stroke:0.1px;transform:scaleX(0.9570);transform-origin:0 50%;">SQL File 11*</span>
<span class="t" style="left:223.70px;top:44.78px;font-size:4.7px;line-height:5.64px;color:#505050;-webkit-text-stroke:0.1px;transform:scaleX(0.9444);transform-origin:0 50%;">SQL File 12*</span>
<span class="t" style="left:260.10px;top:44.78px;font-size:4.7px;line-height:5.64px;color:#505050;-webkit-text-stroke:0.1px;transform:scaleX(0.9444);transform-origin:0 50%;">SQL File 13*</span>
<span class="t" style="left:296.50px;top:44.78px;font-size:4.7px;line-height:5.64px;color:#505050;-webkit-text-stroke:0.1px;transform:scaleX(0.9444);transform-origin:0 50%;">SQL File 14*</span>
<span class="t" style="left:332.70px;top:44.78px;font-size:4.7px;line-height:5.64px;color:#505050;-webkit-text-stroke:0.1px;transform:scaleX(0.9444);transform-origin:0 50%;">SQL File 15*</span>
<span class="t" style="left:369.30px;top:44.78px;font-size:4.7px;line-height:5.64px;color:#505050;-webkit-text-stroke:0.1px;transform:scaleX(0.9444);transform-origin:0 50%;">SQL File 16*</span>
<span class="t" style="left:405.70px;top:44.78px;font-size:4.7px;line-height:5.64px;color:#505050;-webkit-text-stroke:0.1px;transform:scaleX(0.9444);transform-origin:0 50%;">SQL File 17*</span>
<span class="t" style="left:442.30px;top:44.78px;font-size:4.7px;line-height:5.64px;color:#505050;-webkit-text-stroke:0.1px;transform:scaleX(0.9444);transform-origin:0 50%;">SQL File 18*</span>
<span class="t" style="left:479.00px;top:44.78px;font-size:4.7px;line-height:5.64px;color:#505050;-webkit-text-stroke:0.1px;transform:scaleX(0.9444);transform-origin:0 50%;">SQL File 19*</span>
<span class="t" style="left:515.20px;top:44.78px;font-size:4.7px;line-height:5.64px;color:#505050;-webkit-text-stroke:0.1px;transform:scaleX(0.9444);transform-origin:0 50%;">SQL File 15*</span>
<span class="t" style="left:551.60px;top:44.78px;font-size:4.7px;line-height:5.64px;color:#505050;-webkit-text-stroke:0.1px;transform:scaleX(0.9444);transform-origin:0 50%;">SQL File 16*</span>
<span class="t" style="left:588.50px;top:44.78px;font-size:4.7px;line-height:5.64px;color:#505050;-webkit-text-stroke:0.1px;transform:scaleX(0.9444);transform-origin:0 50%;">SQL File 17*</span>
<span class="t" style="left:624.90px;top:44.78px;font-size:4.7px;line-height:5.64px;color:#505050;-webkit-text-stroke:0.1px;transform:scaleX(0.9444);transform-origin:0 50%;">SQL File 18*</span>
<span class="t" style="left:661.30px;top:44.78px;font-size:4.7px;line-height:5.64px;color:#505050;-webkit-text-stroke:0.1px;transform:scaleX(0.9444);transform-origin:0 50%;">SQL File 19*</span>
<span class="t" style="left:697.90px;top:44.78px;font-size:4.7px;line-height:5.64px;color:#505050;-webkit-text-stroke:0.1px;transform:scaleX(0.9444);transform-origin:0 50%;">SQL File 20*</span>
<div style="left:729.50px;top:43.20px;width:13.40px;height:6.60px;background:#fff;box-sizing:border-box;border:0.6px solid #b5b5b5;"></div>
<svg style="left:731.90px;top:44.60px;width:3.00px;height:3.80px" viewBox="0 0 3 3.8" preserveAspectRatio="none"><path d="M1.5 0L3 2H2V3.8H1V2H0Z" fill="#555"/></svg>
<svg style="left:737.50px;top:44.60px;width:3.00px;height:3.80px" viewBox="0 0 3 3.8" preserveAspectRatio="none"><path d="M1.5 3.8L3 1.8H2V0H1V1.8H0Z" fill="#2b4fd0"/></svg>
<div style="left:78.90px;top:51.60px;width:663.80px;height:10.60px;background:#f9f9f9;"></div>
<svg style="left:83.80px;top:53.70px;width:7.20px;height:7.20px" viewBox="0 0 8 8" preserveAspectRatio="none"><path d="M0.6 1.6H3.2L3.9 2.4H7.4V6.8H0.6Z" fill="#8eb0d2" stroke="#7a9fc4" stroke-width="0.3"/><path d="M0.6 3.4H7.4V6.8H0.6Z" fill="#b4cfe9"/></svg>
<svg style="left:94.10px;top:53.70px;width:7.20px;height:7.20px" viewBox="0 0 8 8" preserveAspectRatio="none"><rect x="1" y="1" width="6" height="6" rx="0.5" fill="#566d8c"/><rect x="2.2" y="1" width="3.6" height="2.3" fill="#dfe7f0"/><rect x="2.4" y="4.6" width="3.2" height="2.4" fill="#3c5273"/></svg>
<svg style="left:106.30px;top:53.70px;width:7.20px;height:7.20px" viewBox="0 0 8 8" preserveAspectRatio="none"><path d="M4.8 0.4L2 4.2H3.8L2.6 7.6L6.2 3.2H4.3L5.8 0.4Z" fill="#e3c160" stroke="#b9964a" stroke-width="0.3"/></svg>
<svg style="left:117.10px;top:53.70px;width:7.20px;height:7.20px" viewBox="0 0 8 8" preserveAspectRatio="none"><path d="M4.8 0.4L2 4.2H3.8L2.6 7.6L6.2 3.2H4.3L5.8 0.4Z" fill="#e3c160" stroke="#b9964a" stroke-width="0.3"/><path d="M4.6 5.2V7.6" stroke="#666" stroke-width="0.7"/></svg>
<svg style="left:127.80px;top:53.70px;width:7.20px;height:7.20px" viewBox="0 0 8 8" preserveAspectRatio="none"><circle cx="3.6" cy="3.2" r="2.3" fill="#f3ecd2" stroke="#8b7a4a" stroke-width="0.7"/><path d="M5.2 5L7.2 7.4" stroke="#6d5f3a" stroke-width="1"/><path d="M3.9 1.6L2.8 3.4H3.7L3.2 4.8L4.6 3H3.8Z" fill="#d9a520"/></svg>
<svg style="left:138.10px;top:53.70px;width:7.20px;height:7.20px" viewBox="0 0 8 8" preserveAspectRatio="none"><circle cx="4" cy="4" r="3" fill="#e4e2e0" stroke="#a9a5a2" stroke-width="0.8"/></svg>
<svg style="left:151.10px;top:53.70px;width:7.20px;height:7.20px" viewBox="0 0 8 8" preserveAspectRatio="none"><rect x="0.8" y="1" width="4.4" height="4" rx="0.8" fill="#d2584e"/><rect x="3" y="3" width="4.2" height="4" rx="0.8" fill="#c8443a"/><circle cx="3" cy="3" r="0.9" fill="#f6d6d2"/><circle cx="5.2" cy="5" r="0.9" fill="#f6d6d2"/></svg>
<svg style="left:163.80px;top:53.70px;width:7.20px;height:7.20px" viewBox="0 0 8 8" preserveAspectRatio="none"><circle cx="4" cy="4" r="3" fill="#d6d6d6"/><circle cx="4" cy="4" r="1.4" fill="#ececec"/></svg>
<svg style="left:174.50px;top:53.70px;width:7.20px;height:7.20px" viewBox="0 0 8 8" preserveAspectRatio="none"><circle cx="4" cy="4" r="3" fill="#d6d6d6"/><circle cx="4" cy="4" r="1.4" fill="#ececec"/></svg>
<div style="left:184.90px;top:52.60px;width:8.80px;height:9.00px;background:#d6e6f7;box-sizing:border-box;border:0.5px solid #9fc3ea;"></div>
<svg style="left:185.70px;top:53.70px;width:7.20px;height:7.20px" viewBox="0 0 8 8" preserveAspectRatio="none"><rect x="1.4" y="0.8" width="5.2" height="6.4" fill="#f4f1df" stroke="#8a8f9c" stroke-width="0.5"/><circle cx="4.2" cy="4.4" r="1.6" fill="#5b86c4"/><path d="M2.2 2H5.8" stroke="#b7a24a" stroke-width="0.6"/></svg>
<div style="left:103.70px;top:53.60px;width:0.50px;height:7.20px;background:#e6e6e6;"></div>
<div style="left:148.30px;top:53.60px;width:0.50px;height:7.20px;background:#e6e6e6;"></div>
<div style="left:161.10px;top:53.60px;width:0.50px;height:7.20px;background:#e6e6e6;"></div>
<div style="left:246.50px;top:53.60px;width:0.50px;height:7.20px;background:#e6e6e6;"></div>
<div style="left:259.30px;top:53.60px;width:0.50px;height:7.20px;background:#e6e6e6;"></div>
<div style="left:196.30px;top:53.20px;width:48.80px;height:8.00px;background:#fbfbfb;"></div>
<span class="t" style="left:198.70px;top:55.08px;font-size:4.54px;line-height:5.45px;color:#222;-webkit-text-stroke:0.1px;transform:scaleX(0.8957);transform-origin:0 50%;">Limit to 1000 rows</span>
<svg style="left:240.30px;top:56.50px;width:2.80px;height:1.80px" viewBox="0 0 2.8 1.8" preserveAspectRatio="none"><path d="M0 0H2.8L1.4 1.8Z" fill="#444"/></svg>
<svg style="left:249.10px;top:53.70px;width:7.20px;height:7.20px" viewBox="0 0 8 8" preserveAspectRatio="none"><path d="M3.4 0.6L4.3 2.6L6.4 2.8L4.8 4.2L5.3 6.4L3.4 5.2L1.5 6.4L2 4.2L0.4 2.8L2.5 2.6Z" fill="#e9c13c" stroke="#b8922a" stroke-width="0.3"/><circle cx="6" cy="6" r="1.4" fill="#6fae4c"/></svg>
<svg style="left:261.50px;top:53.70px;width:7.20px;height:7.20px" viewBox="0 0 8 8" preserveAspectRatio="none"><path d="M7.2 1L3.6 3.6L4.6 4.8Z" fill="#a3702e"/><path d="M0.8 4.2L3.6 3.2L5 4.8L3.4 7Z" fill="#e3b23c" stroke="#a8801f" stroke-width="0.3"/></svg>
<svg style="left:271.80px;top:53.70px;width:7.20px;height:7.20px" viewBox="0 0 8 8" preserveAspectRatio="none"><circle cx="3.3" cy="3.1" r="2.2" fill="#f2f4f7" stroke="#8d939c" stroke-width="0.7"/><path d="M4.9 4.8L7 7.2" stroke="#8d939c" stroke-width="1"/></svg>
<svg style="left:282.30px;top:53.70px;width:7.20px;height:7.20px" viewBox="0 0 8 8" preserveAspectRatio="none"><rect x="1.2" y="0.8" width="5.6" height="6.4" fill="#f6f6f6" stroke="#8a8a8a" stroke-width="0.5"/><path d="M3.2 2V6M4.8 2V6M2.6 2H5.4" stroke="#333" stroke-width="0.7" fill="none"/></svg>
<svg style="left:292.80px;top:53.70px;width:7.20px;height:7.20px" viewBox="0 0 8 8" preserveAspectRatio="none"><rect x="1" y="1.2" width="6" height="5.6" fill="#f6f6f6" stroke="#8a8a8a" stroke-width="0.5"/><path d="M2.2 3H5.8V5H3.6M4.4 4.2L3.4 5L4.4 5.8" stroke="#444" stroke-width="0.55" fill="none"/></svg>
<div style="left:78.90px;top:62.20px;width:663.80px;height:254.00px;background:#fff;"></div>
<div style="left:106.10px;top:146.20px;width:636.60px;height:13.50px;background:#efefef;"></div>
<span class="t" style="left:86.85px;top:65.87px;font-size:8.39px;line-height:10.07px;color:#4f7688;font-family:'Liberation Mono',monospace;-webkit-text-stroke:0.26px;letter-spacing:0.012px;-webkit-text-stroke:0.05px;">1</span>
<span class="t" style="left:86.85px;top:79.70px;font-size:8.39px;line-height:10.07px;color:#4f7688;font-family:'Liberation Mono',monospace;-webkit-text-stroke:0.26px;letter-spacing:0.012px;-webkit-text-stroke:0.05px;">2</span>
<span class="t" style="left:106.80px;top:79.70px;font-size:8.39px;line-height:10.07px;color:#3a93c8;font-family:'Liberation Mono',monospace;-webkit-text-stroke:0.26px;letter-spacing:0.012px;-webkit-text-stroke:0.08px;">-- Farklı tablolara 3 kayıt ekleme</span>
<span class="t" style="left:86.85px;top:93.53px;font-size:8.39px;line-height:10.07px;color:#4f7688;font-family:'Liberation Mono',monospace;-webkit-text-stroke:0.26px;letter-spacing:0.012px;-webkit-text-stroke:0.05px;">3</span>
<span class="t" style="left:106.80px;top:93.53px;font-size:8.39px;line-height:10.07px;color:#3a93c8;font-family:'Liberation Mono',monospace;-webkit-text-stroke:0.26px;letter-spacing:0.012px;-webkit-text-stroke:0.08px;">-- musteriler</span>
<span class="t" style="left:86.85px;top:107.36px;font-size:8.39px;line-height:10.07px;color:#4f7688;font-family:'Liberation Mono',monospace;-webkit-text-stroke:0.26px;letter-spacing:0.012px;-webkit-text-stroke:0.05px;">4</span>
<span class="t" style="left:106.80px;top:107.36px;font-size:8.39px;line-height:10.07px;color:#1c7fb6;font-weight:700;font-family:'Liberation Mono',monospace;-webkit-text-stroke:0.26px;letter-spacing:0.012px;">INSERT INTO</span>
<span class="t" style="left:167.36px;top:107.36px;font-size:8.39px;line-height:10.07px;color:#2b2b2b;font-family:'Liberation Mono',monospace;-webkit-text-stroke:0.26px;letter-spacing:0.012px;">musteriler (adi, soyadi, Email, telnumara)</span>
<span class="t" style="left:384.38px;top:107.36px;font-size:8.39px;line-height:10.07px;color:#1c7fb6;font-weight:700;font-family:'Liberation Mono',monospace;-webkit-text-stroke:0.26px;letter-spacing:0.012px;">VALUES</span>
<span class="t" style="left:419.71px;top:107.36px;font-size:8.39px;line-height:10.07px;color:#2b2b2b;font-family:'Liberation Mono',monospace;-webkit-text-stroke:0.26px;letter-spacing:0.012px;">(</span>
<span class="t" style="left:424.76px;top:107.36px;font-size:8.39px;line-height:10.07px;color:#e08f33;font-family:'Liberation Mono',monospace;-webkit-text-stroke:0.26px;letter-spacing:0.012px;">'clark'</span>
<span class="t" style="left:460.09px;top:107.36px;font-size:8.39px;line-height:10.07px;color:#2b2b2b;font-family:'Liberation Mono',monospace;-webkit-text-stroke:0.26px;letter-spacing:0.012px;">,</span>
<span class="t" style="left:470.18px;top:107.36px;font-size:8.39px;line-height:10.07px;color:#e08f33;font-family:'Liberation Mono',monospace;-webkit-text-stroke:0.26px;letter-spacing:0.012px;">'kent'</span>
<span class="t" style="left:500.47px;top:107.36px;font-size:8.39px;line-height:10.07px;color:#2b2b2b;font-family:'Liberation Mono',monospace;-webkit-text-stroke:0.26px;letter-spacing:0.012px;">,</span>
<span class="t" style="left:510.56px;top:107.36px;font-size:8.39px;line-height:10.07px;color:#e08f33;font-family:'Liberation Mono',monospace;-webkit-text-stroke:0.26px;letter-spacing:0.012px;">'clark@example.com'</span>
<span class="t" style="left:606.45px;top:107.36px;font-size:8.39px;line-height:10.07px;color:#2b2b2b;font-family:'Liberation Mono',monospace;-webkit-text-stroke:0.26px;letter-spacing:0.012px;">,</span>
<span class="t" style="left:616.55px;top:107.36px;font-size:8.39px;line-height:10.07px;color:#e08f33;font-family:'Liberation Mono',monospace;-webkit-text-stroke:0.26px;letter-spacing:0.012px;">'1234567890'</span>
<span class="t" style="left:677.11px;top:107.36px;font-size:8.39px;line-height:10.07px;color:#2b2b2b;font-family:'Liberation Mono',monospace;-webkit-text-stroke:0.26px;letter-spacing:0.012px;">);</span>
<svg style="left:94.70px;top:110.49px;width:2.00px;height:2.00px" viewBox="0 0 2 2" preserveAspectRatio="none"><rect width="2" height="2" rx="0.3" fill="#2b5a8c"/></svg>
<span class="t" style="left:86.85px;top:121.19px;font-size:8.39px;line-height:10.07px;color:#4f7688;font-family:'Liberation Mono',monospace;-webkit-text-stroke:0.26px;letter-spacing:0.012px;-webkit-text-stroke:0.05px;">5</span>
<span class="t" style="left:106.80px;top:121.19px;font-size:8.39px;line-height:10.07px;color:#1c7fb6;font-weight:700;font-family:'Liberation Mono',monospace;-webkit-text-stroke:0.26px;letter-spacing:0.012px;">INSERT INTO</span>
<span class="t" style="left:167.36px;top:121.19px;font-size:8.39px;line-height:10.07px;color:#2b2b2b;font-family:'Liberation Mono',monospace;-webkit-text-stroke:0.26px;letter-spacing:0.012px;">musteriler (adi, soyadi, Email, telnumara)</span>
<span class="t" style="left:384.38px;top:121.19px;font-size:8.39px;line-height:10.07px;color:#1c7fb6;font-weight:700;font-family:'Liberation Mono',monospace;-webkit-text-stroke:0.26px;letter-spacing:0.012px;">VALUES</span>
<span class="t" style="left:419.71px;top:121.19px;font-size:8.39px;line-height:10.07px;color:#2b2b2b;font-family:'Liberation Mono',monospace;-webkit-text-stroke:0.26px;letter-spacing:0.012px;">(</span>
<span class="t" style="left:424.76px;top:121.19px;font-size:8.39px;line-height:10.07px;color:#e08f33;font-family:'Liberation Mono',monospace;-webkit-text-stroke:0.26px;letter-spacing:0.012px;">'carl'</span>
<span class="t" style="left:455.04px;top:121.19px;font-size:8.39px;line-height:10.07px;color:#2b2b2b;font-family:'Liberation Mono',monospace;-webkit-text-stroke:0.26px;letter-spacing:0.012px;">,</span>
<span class="t" style="left:465.14px;top:121.19px;font-size:8.39px;line-height:10.07px;color:#e08f33;font-family:'Liberation Mono',monospace;-webkit-text-stroke:0.26px;letter-spacing:0.012px;">'jhons'</span>
<span class="t" style="left:500.47px;top:121.19px;font-size:8.39px;line-height:10.07px;color:#2b2b2b;font-family:'Liberation Mono',monospace;-webkit-text-stroke:0.26px;letter-spacing:0.012px;">,</span>
<span class="t" style="left:510.56px;top:121.19px;font-size:8.39px;line-height:10.07px;color:#e08f33;font-family:'Liberation Mono',monospace;-webkit-text-stroke:0.26px;letter-spacing:0.012px;">'jhon@example.com'</span>
<span class="t" style="left:601.41px;top:121.19px;font-size:8.39px;line-height:10.07px;color:#2b2b2b;font-family:'Liberation Mono',monospace;-webkit-text-stroke:0.26px;letter-spacing:0.012px;">,</span>
<span class="t" style="left:611.50px;top:121.19px;font-size:8.39px;line-height:10.07px;color:#e08f33;font-family:'Liberation Mono',monospace;-webkit-text-stroke:0.26px;letter-spacing:0.012px;">'237564242685'</span>
<span class="t" style="left:682.16px;top:121.19px;font-size:8.39px;line-height:10.07px;color:#2b2b2b;font-family:'Liberation Mono',monospace;-webkit-text-stroke:0.26px;letter-spacing:0.012px;">);</span>
<svg style="left:94.70px;top:124.32px;width:2.00px;height:2.00px" viewBox="0 0 2 2" preserveAspectRatio="none"><rect width="2" height="2" rx="0.3" fill="#2b5a8c"/></svg>
<span class="t" style="left:86.85px;top:135.02px;font-size:8.39px;line-height:10.07px;color:#4f7688;font-family:'Liberation Mono',monospace;-webkit-text-stroke:0.26px;letter-spacing:0.012px;-webkit-text-stroke:0.05px;">6</span>
<span class="t" style="left:106.80px;top:135.02px;font-size:8.39px;line-height:10.07px;color:#1c7fb6;font-weight:700;font-family:'Liberation Mono',monospace;-webkit-text-stroke:0.26px;letter-spacing:0.012px;">INSERT INTO</span>
<span class="t" style="left:167.36px;top:135.02px;font-size:8.39px;line-height:10.07px;color:#2b2b2b;font-family:'Liberation Mono',monospace;-webkit-text-stroke:0.26px;letter-spacing:0.012px;">musteriler (adi, soyadi, Email, telnumara)</span>
<span class="t" style="left:384.38px;top:135.02px;font-size:8.39px;line-height:10.07px;color:#1c7fb6;font-weight:700;font-family:'Liberation Mono',monospace;-webkit-text-stroke:0.26px;letter-spacing:0.012px;">VALUES</span>
<span class="t" style="left:419.71px;top:135.02px;font-size:8.39px;line-height:10.07px;color:#2b2b2b;font-family:'Liberation Mono',monospace;-webkit-text-stroke:0.26px;letter-spacing:0.012px;">(</span>
<span class="t" style="left:424.76px;top:135.02px;font-size:8.39px;line-height:10.07px;color:#e08f33;font-family:'Liberation Mono',monospace;-webkit-text-stroke:0.26px;letter-spacing:0.012px;">'morgan'</span>
<span class="t" style="left:465.14px;top:135.02px;font-size:8.39px;line-height:10.07px;color:#2b2b2b;font-family:'Liberation Mono',monospace;-webkit-text-stroke:0.26px;letter-spacing:0.012px;">,</span>
<span class="t" style="left:475.23px;top:135.02px;font-size:8.39px;line-height:10.07px;color:#e08f33;font-family:'Liberation Mono',monospace;-webkit-text-stroke:0.26px;letter-spacing:0.012px;">'freeman'</span>
<span class="t" style="left:520.65px;top:135.02px;font-size:8.39px;line-height:10.07px;color:#2b2b2b;font-family:'Liberation Mono',monospace;-webkit-text-stroke:0.26px;letter-spacing:0.012px;">,</span>
<span class="t" style="left:530.75px;top:135.02px;font-size:8.39px;line-height:10.07px;color:#e08f33;font-family:'Liberation Mono',monospace;-webkit-text-stroke:0.26px;letter-spacing:0.012px;">'morgan@example.com'</span>
<span class="t" style="left:631.69px;top:135.02px;font-size:8.39px;line-height:10.07px;color:#2b2b2b;font-family:'Liberation Mono',monospace;-webkit-text-stroke:0.26px;letter-spacing:0.012px;">,</span>
<span class="t" style="left:641.78px;top:135.02px;font-size:8.39px;line-height:10.07px;color:#e08f33;font-family:'Liberation Mono',monospace;-webkit-text-stroke:0.26px;letter-spacing:0.012px;">'7585636738'</span>
<span class="t" style="left:702.35px;top:135.02px;font-size:8.39px;line-height:10.07px;color:#2b2b2b;font-family:'Liberation Mono',monospace;-webkit-text-stroke:0.26px;letter-spacing:0.012px;">);</span>
<svg style="left:94.70px;top:138.15px;width:2.00px;height:2.00px" viewBox="0 0 2 2" preserveAspectRatio="none"><rect width="2" height="2" rx="0.3" fill="#2b5a8c"/></svg>
<span class="t" style="left:86.85px;top:148.85px;font-size:8.39px;line-height:10.07px;color:#4f7688;font-family:'Liberation Mono',monospace;-webkit-text-stroke:0.26px;letter-spacing:0.012px;-webkit-text-stroke:0.05px;">7</span>
<span class="t" style="left:106.80px;top:148.85px;font-size:8.39px;line-height:10.07px;color:#3a93c8;font-family:'Liberation Mono',monospace;-webkit-text-stroke:0.26px;letter-spacing:0.012px;-webkit-text-stroke:0.08px;">-- odalar</span>
<span class="t" style="left:86.85px;top:162.68px;font-size:8.39px;line-height:10.07px;color:#4f7688;font-family:'Liberation Mono',monospace;-webkit-text-stroke:0.26px;letter-spacing:0.012px;-webkit-text-stroke:0.05px;">8</span>
<span class="t" style="left:106.80px;top:162.68px;font-size:8.39px;line-height:10.07px;color:#1c7fb6;font-weight:700;font-family:'Liberation Mono',monospace;-webkit-text-stroke:0.26px;letter-spacing:0.012px;">INSERT INTO</span>
<span class="t" style="left:167.36px;top:162.68px;font-size:8.39px;line-height:10.07px;color:#2b2b2b;font-family:'Liberation Mono',monospace;-webkit-text-stroke:0.26px;letter-spacing:0.012px;">odalar (oda_numara, oda_turu_id)</span>
<span class="t" style="left:333.91px;top:162.68px;font-size:8.39px;line-height:10.07px;color:#1c7fb6;font-weight:700;font-family:'Liberation Mono',monospace;-webkit-text-stroke:0.26px;letter-spacing:0.012px;">VALUES</span>
<span class="t" style="left:369.24px;top:162.68px;font-size:8.39px;line-height:10.07px;color:#2b2b2b;font-family:'Liberation Mono',monospace;-webkit-text-stroke:0.26px;letter-spacing:0.012px;">(</span>
<span class="t" style="left:374.29px;top:162.68px;font-size:8.39px;line-height:10.07px;color:#e08f33;font-family:'Liberation Mono',monospace;-webkit-text-stroke:0.26px;letter-spacing:0.012px;">'101'</span>
<span class="t" style="left:399.53px;top:162.68px;font-size:8.39px;line-height:10.07px;color:#2b2b2b;font-family:'Liberation Mono',monospace;-webkit-text-stroke:0.26px;letter-spacing:0.012px;">,</span>
<span class="t" style="left:409.62px;top:162.68px;font-size:8.39px;line-height:10.07px;color:#e08f33;font-family:'Liberation Mono',monospace;-webkit-text-stroke:0.26px;letter-spacing:0.012px;">'1'</span>
<span class="t" style="left:424.76px;top:162.68px;font-size:8.39px;line-height:10.07px;color:#2b2b2b;font-family:'Liberation Mono',monospace;-webkit-text-stroke:0.26px;letter-spacing:0.012px;">);</span>
<svg style="left:94.70px;top:165.81px;width:2.00px;height:2.00px" viewBox="0 0 2 2" preserveAspectRatio="none"><rect width="2" height="2" rx="0.3" fill="#2b5a8c"/></svg>
<span class="t" style="left:86.85px;top:176.51px;font-size:8.39px;line-height:10.07px;color:#4f7688;font-family:'Liberation Mono',monospace;-webkit-text-stroke:0.26px;letter-spacing:0.012px;-webkit-text-stroke:0.05px;">9</span>
<span class="t" style="left:106.80px;top:176.51px;font-size:8.39px;line-height:10.07px;color:#1c7fb6;font-weight:700;font-family:'Liberation Mono',monospace;-webkit-text-stroke:0.26px;letter-spacing:0.012px;">INSERT INTO</span>
<span class="t" style="left:167.36px;top:176.51px;font-size:8.39px;line-height:10.07px;color:#2b2b2b;font-family:'Liberation Mono',monospace;-webkit-text-stroke:0.26px;letter-spacing:0.012px;">odalar (oda_numara, oda_turu_id)</span>
<span class="t" style="left:333.91px;top:176.51px;font-size:8.39px;line-height:10.07px;color:#1c7fb6;font-weight:700;font-family:'Liberation Mono',monospace;-webkit-text-stroke:0.26px;letter-spacing:0.012px;">VALUES</span>
<span class="t" style="left:369.24px;top:176.51px;font-size:8.39px;line-height:10.07px;color:#2b2b2b;font-family:'Liberation Mono',monospace;-webkit-text-stroke:0.26px;letter-spacing:0.012px;">(</span>
<span class="t" style="left:374.29px;top:176.51px;font-size:8.39px;line-height:10.07px;color:#e08f33;font-family:'Liberation Mono',monospace;-webkit-text-stroke:0.26px;letter-spacing:0.012px;">'104'</span>
<span class="t" style="left:399.53px;top:176.51px;font-size:8.39px;line-height:10.07px;color:#2b2b2b;font-family:'Liberation Mono',monospace;-webkit-text-stroke:0.26px;letter-spacing:0.012px;">,</span>
<span class="t" style="left:409.62px;top:176.51px;font-size:8.39px;line-height:10.07px;color:#e08f33;font-family:'Liberation Mono',monospace;-webkit-text-stroke:0.26px;letter-spacing:0.012px;">'2'</span>
<span class="t" style="left:424.76px;top:176.51px;font-size:8.39px;line-height:10.07px;color:#2b2b2b;font-family:'Liberation Mono',monospace;-webkit-text-stroke:0.26px;letter-spacing:0.012px;">);</span>
<svg style="left:94.70px;top:179.64px;width:2.00px;height:2.00px" viewBox="0 0 2 2" preserveAspectRatio="none"><rect width="2" height="2" rx="0.3" fill="#2b5a8c"/></svg>
<span class="t" style="left:81.81px;top:190.34px;font-size:8.39px;line-height:10.07px;color:#4f7688;font-family:'Liberation Mono',monospace;-webkit-text-stroke:0.26px;letter-spacing:0.012px;-webkit-text-stroke:0.05px;">10</span>
<span class="t" style="left:106.80px;top:190.34px;font-size:8.39px;line-height:10.07px;color:#1c7fb6;font-weight:700;font-family:'Liberation Mono',monospace;-webkit-text-stroke:0.26px;letter-spacing:0.012px;">INSERT INTO</span>
<span class="t" style="left:167.36px;top:190.34px;font-size:8.39px;line-height:10.07px;color:#2b2b2b;font-family:'Liberation Mono',monospace;-webkit-text-stroke:0.26px;letter-spacing:0.012px;">odalar (oda_numara, oda_turu_id)</span>
<span class="t" style="left:333.91px;top:190.34px;font-size:8.39px;line-height:10.07px;color:#1c7fb6;font-weight:700;font-family:'Liberation Mono',monospace;-webkit-text-stroke:0.26px;letter-spacing:0.012px;">VALUES</span>
<span class="t" style="left:369.24px;top:190.34px;font-size:8.39px;line-height:10.07px;color:#2b2b2b;font-family:'Liberation Mono',monospace;-webkit-text-stroke:0.26px;letter-spacing:0.012px;">(</span>
<span class="t" style="left:374.29px;top:190.34px;font-size:8.39px;line-height:10.07px;color:#e08f33;font-family:'Liberation Mono',monospace;-webkit-text-stroke:0.26px;letter-spacing:0.012px;">'105'</span>
<span class="t" style="left:399.53px;top:190.34px;font-size:8.39px;line-height:10.07px;color:#2b2b2b;font-family:'Liberation Mono',monospace;-webkit-text-stroke:0.26px;letter-spacing:0.012px;">,</span>
<span class="t" style="left:409.62px;top:190.34px;font-size:8.39px;line-height:10.07px;color:#e08f33;font-family:'Liberation Mono',monospace;-webkit-text-stroke:0.26px;letter-spacing:0.012px;">'3'</span>
<span class="t" style="left:424.76px;top:190.34px;font-size:8.39px;line-height:10.07px;color:#2b2b2b;font-family:'Liberation Mono',monospace;-webkit-text-stroke:0.26px;letter-spacing:0.012px;">);</span>
<svg style="left:94.70px;top:193.47px;width:2.00px;height:2.00px" viewBox="0 0 2 2" preserveAspectRatio="none"><rect width="2" height="2" rx="0.3" fill="#2b5a8c"/></svg>
<span class="t" style="left:81.81px;top:204.17px;font-size:8.39px;line-height:10.07px;color:#4f7688;font-family:'Liberation Mono',monospace;-webkit-text-stroke:0.26px;letter-spacing:0.012px;-webkit-text-stroke:0.05px;">11</span>
<span class="t" style="left:106.80px;top:204.17px;font-size:8.39px;line-height:10.07px;color:#3a93c8;font-family:'Liberation Mono',monospace;-webkit-text-stroke:0.26px;letter-spacing:0.012px;-webkit-text-stroke:0.08px;">-- hizmetler</span>
<span class="t" style="left:81.81px;top:218.00px;font-size:8.39px;line-height:10.07px;color:#4f7688;font-family:'Liberation Mono',monospace;-webkit-text-stroke:0.26px;letter-spacing:0.012px;-webkit-text-stroke:0.05px;">12</span>
<span class="t" style="left:106.80px;top:218.00px;font-size:8.39px;line-height:10.07px;color:#1c7fb6;font-weight:700;font-family:'Liberation Mono',monospace;-webkit-text-stroke:0.26px;letter-spacing:0.012px;">INSERT INTO</span>
<span class="t" style="left:167.36px;top:218.00px;font-size:8.39px;line-height:10.07px;color:#2b2b2b;font-family:'Liberation Mono',monospace;-webkit-text-stroke:0.26px;letter-spacing:0.012px;">hizmetler (hizmet_adi, tanim,fiyat)</span>
<span class="t" style="left:349.06px;top:218.00px;font-size:8.39px;line-height:10.07px;color:#1c7fb6;font-weight:700;font-family:'Liberation Mono',monospace;-webkit-text-stroke:0.26px;letter-spacing:0.012px;">VALUES</span>
<span class="t" style="left:384.38px;top:218.00px;font-size:8.39px;line-height:10.07px;color:#2b2b2b;font-family:'Liberation Mono',monospace;-webkit-text-stroke:0.26px;letter-spacing:0.012px;">(</span>
<span class="t" style="left:389.43px;top:218.00px;font-size:8.39px;line-height:10.07px;color:#e08f33;font-family:'Liberation Mono',monospace;-webkit-text-stroke:0.26px;letter-spacing:0.012px;">'Free Wi-Fi'</span>
<span class="t" style="left:450.00px;top:218.00px;font-size:8.39px;line-height:10.07px;color:#2b2b2b;font-family:'Liberation Mono',monospace;-webkit-text-stroke:0.26px;letter-spacing:0.012px;">,</span>
<span class="t" style="left:460.09px;top:218.00px;font-size:8.39px;line-height:10.07px;color:#e08f33;font-family:'Liberation Mono',monospace;-webkit-text-stroke:0.26px;letter-spacing:0.012px;">'High-speed internet access'</span>
<span class="t" style="left:601.41px;top:218.00px;font-size:8.39px;line-height:10.07px;color:#2b2b2b;font-family:'Liberation Mono',monospace;-webkit-text-stroke:0.26px;letter-spacing:0.012px;">,</span>
<span class="t" style="left:606.45px;top:218.00px;font-size:8.39px;line-height:10.07px;color:#e08f33;font-family:'Liberation Mono',monospace;-webkit-text-stroke:0.26px;letter-spacing:0.012px;">14.25</span>
<span class="t" style="left:631.69px;top:218.00px;font-size:8.39px;line-height:10.07px;color:#2b2b2b;font-family:'Liberation Mono',monospace;-webkit-text-stroke:0.26px;letter-spacing:0.012px;">);</span>
<svg style="left:94.70px;top:221.13px;width:2.00px;height:2.00px" viewBox="0 0 2 2" preserveAspectRatio="none"><rect width="2" height="2" rx="0.3" fill="#2b5a8c"/></svg>
<span class="t" style="left:81.81px;top:231.83px;font-size:8.39px;line-height:10.07px;color:#4f7688;font-family:'Liberation Mono',monospace;-webkit-text-stroke:0.26px;letter-spacing:0.012px;-webkit-text-stroke:0.05px;">13</span>
<span class="t" style="left:106.80px;top:231.83px;font-size:8.39px;line-height:10.07px;color:#1c7fb6;font-weight:700;font-family:'Liberation Mono',monospace;-webkit-text-stroke:0.26px;letter-spacing:0.012px;">INSERT INTO</span>
<span class="t" style="left:167.36px;top:231.83px;font-size:8.39px;line-height:10.07px;color:#2b2b2b;font-family:'Liberation Mono',monospace;-webkit-text-stroke:0.26px;letter-spacing:0.012px;">hizmetler (hizmet_adi, tanim,fiyat)</span>
<span class="t" style="left:349.06px;top:231.83px;font-size:8.39px;line-height:10.07px;color:#1c7fb6;font-weight:700;font-family:'Liberation Mono',monospace;-webkit-text-stroke:0.26px;letter-spacing:0.012px;">VALUES</span>
<span class="t" style="left:384.38px;top:231.83px;font-size:8.39px;line-height:10.07px;color:#2b2b2b;font-family:'Liberation Mono',monospace;-webkit-text-stroke:0.26px;letter-spacing:0.012px;">(</span>
<span class="t" style="left:389.43px;top:231.83px;font-size:8.39px;line-height:10.07px;color:#e08f33;font-family:'Liberation Mono',monospace;-webkit-text-stroke:0.26px;letter-spacing:0.012px;">'gaming'</span>
<span class="t" style="left:429.81px;top:231.83px;font-size:8.39px;line-height:10.07px;color:#2b2b2b;font-family:'Liberation Mono',monospace;-webkit-text-stroke:0.26px;letter-spacing:0.012px;">,</span>
<span class="t" style="left:439.90px;top:231.83px;font-size:8.39px;line-height:10.07px;color:#e08f33;font-family:'Liberation Mono',monospace;-webkit-text-stroke:0.26px;letter-spacing:0.012px;">'access to the gaming center'</span>
<span class="t" style="left:586.26px;top:231.83px;font-size:8.39px;line-height:10.07px;color:#2b2b2b;font-family:'Liberation Mono',monospace;-webkit-text-stroke:0.26px;letter-spacing:0.012px;">,</span>
<span class="t" style="left:591.31px;top:231.83px;font-size:8.39px;line-height:10.07px;color:#e08f33;font-family:'Liberation Mono',monospace;-webkit-text-stroke:0.26px;letter-spacing:0.012px;">10.12</span>
<span class="t" style="left:616.55px;top:231.83px;font-size:8.39px;line-height:10.07px;color:#2b2b2b;font-family:'Liberation Mono',monospace;-webkit-text-stroke:0.26px;letter-spacing:0.012px;">);</span>
<svg style="left:94.70px;top:234.96px;width:2.00px;height:2.00px" viewBox="0 0 2 2" preserveAspectRatio="none"><rect width="2" height="2" rx="0.3" fill="#2b5a8c"/></svg>
<span class="t" style="left:81.81px;top:245.66px;font-size:8.39px;line-height:10.07px;color:#4f7688;font-family:'Liberation Mono',monospace;-webkit-text-stroke:0.26px;letter-spacing:0.012px;-webkit-text-stroke:0.05px;">14</span>
<span class="t" style="left:106.80px;top:245.66px;font-size:8.39px;line-height:10.07px;color:#1c7fb6;font-weight:700;font-family:'Liberation Mono',monospace;-webkit-text-stroke:0.26px;letter-spacing:0.012px;">INSERT INTO</span>
<span class="t" style="left:167.36px;top:245.66px;font-size:8.39px;line-height:10.07px;color:#2b2b2b;font-family:'Liberation Mono',monospace;-webkit-text-stroke:0.26px;letter-spacing:0.012px;">hizmetler (hizmet_adi, tanim,fiyat)</span>
<span class="t" style="left:349.06px;top:245.66px;font-size:8.39px;line-height:10.07px;color:#1c7fb6;font-weight:700;font-family:'Liberation Mono',monospace;-webkit-text-stroke:0.26px;letter-spacing:0.012px;">VALUES</span>
<span class="t" style="left:384.38px;top:245.66px;font-size:8.39px;line-height:10.07px;color:#2b2b2b;font-family:'Liberation Mono',monospace;-webkit-text-stroke:0.26px;letter-spacing:0.012px;">(</span>
<span class="t" style="left:389.43px;top:245.66px;font-size:8.39px;line-height:10.07px;color:#e08f33;font-family:'Liberation Mono',monospace;-webkit-text-stroke:0.26px;letter-spacing:0.012px;">'bodyguard'</span>
<span class="t" style="left:444.95px;top:245.66px;font-size:8.39px;line-height:10.07px;color:#2b2b2b;font-family:'Liberation Mono',monospace;-webkit-text-stroke:0.26px;letter-spacing:0.012px;">,</span>
<span class="t" style="left:455.04px;top:245.66px;font-size:8.39px;line-height:10.07px;color:#e08f33;font-family:'Liberation Mono',monospace;-webkit-text-stroke:0.26px;letter-spacing:0.012px;">'premission to hire a bodyguard'</span>
<span class="t" style="left:616.55px;top:245.66px;font-size:8.39px;line-height:10.07px;color:#2b2b2b;font-family:'Liberation Mono',monospace;-webkit-text-stroke:0.26px;letter-spacing:0.012px;">,</span>
<span class="t" style="left:621.59px;top:245.66px;font-size:8.39px;line-height:10.07px;color:#e08f33;font-family:'Liberation Mono',monospace;-webkit-text-stroke:0.26px;letter-spacing:0.012px;">40.50</span>
<span class="t" style="left:646.83px;top:245.66px;font-size:8.39px;line-height:10.07px;color:#2b2b2b;font-family:'Liberation Mono',monospace;-webkit-text-stroke:0.26px;letter-spacing:0.012px;">);</span>
<svg style="left:94.70px;top:248.79px;width:2.00px;height:2.00px" viewBox="0 0 2 2" preserveAspectRatio="none"><rect width="2" height="2" rx="0.3" fill="#2b5a8c"/></svg>
<div style="left:78.90px;top:316.20px;width:663.80px;height:6.40px;background:#f0f0f0;"></div>
<div style="left:85.70px;top:316.60px;width:533.50px;height:5.60px;background:#c9c9c9;"></div>
<svg style="left:81.30px;top:317.40px;width:2.40px;height:4.00px" viewBox="0 0 2.4 4" preserveAspectRatio="none"><path d="M2 0.2L0.4 2L2 3.8" fill="none" stroke="#2a2a2a" stroke-width="0.85"/></svg>
<svg style="left:739.30px;top:317.40px;width:2.40px;height:4.00px" viewBox="0 0 2.4 4" preserveAspectRatio="none"><path d="M0.4 0.2L2 2L0.4 3.8" fill="none" stroke="#2a2a2a" stroke-width="0.85"/></svg>
<div style="left:78.90px;top:322.60px;width:666.80px;height:3.00px;background:#f0f0f0;"></div>
<div style="left:78.90px;top:325.60px;width:663.80px;height:8.10px;background:linear-gradient(#f2f2f2,#e4e4e4 45%,#e4e4e4 60%,#f2f2f2);"></div>
<span class="t" style="left:81.90px;top:327.28px;font-size:4.7px;line-height:5.64px;color:#8c8c8c;-webkit-text-stroke:0.1px;transform:scaleX(0.9356);transform-origin:0 50%;">Output</span>
<div style="left:78.90px;top:333.70px;width:663.80px;height:11.10px;background:#f4f4f4;"></div>
<div style="left:89.30px;top:334.60px;width:60.20px;height:9.00px;background:#fff;"></div>
<svg style="left:81.50px;top:336.40px;width:6.00px;height:6.80px" viewBox="0 0 6 6.8" preserveAspectRatio="none"><rect x="1.6" y="0.4" width="3.8" height="4.8" fill="#fff" stroke="#555" stroke-width="0.5"/><rect x="0.4" y="1.6" width="3.8" height="4.8" fill="#fff" stroke="#555" stroke-width="0.5"/></svg>
<span class="t" style="left:91.50px;top:337.68px;font-size:4.54px;line-height:5.45px;color:#222;-webkit-text-stroke:0.1px;transform:scaleX(0.8979);transform-origin:0 50%;">Action Output</span>
<svg style="left:144.30px;top:339.00px;width:2.80px;height:1.80px" viewBox="0 0 2.8 1.8" preserveAspectRatio="none"><path d="M0 0H2.8L1.4 1.8Z" fill="#444"/></svg>
<div style="left:78.90px;top:344.80px;width:663.80px;height:92.20px;background:#fff;"></div>
<span class="t" style="left:90.30px;top:346.83px;font-size:4.12px;line-height:4.94px;color:#4a4a4a;-webkit-text-stroke:0.1px;">#</span>
<span class="t" style="left:104.40px;top:346.83px;font-size:4.12px;line-height:4.94px;color:#4a4a4a;-webkit-text-stroke:0.1px;transform:scaleX(0.8442);transform-origin:0 50%;">Time</span>
<span class="t" style="left:124.30px;top:346.83px;font-size:4.12px;line-height:4.94px;color:#4a4a4a;-webkit-text-stroke:0.1px;transform:scaleX(0.9257);transform-origin:0 50%;">Action</span>
<span class="t" style="left:409.00px;top:346.83px;font-size:4.12px;line-height:4.94px;color:#4a4a4a;-webkit-text-stroke:0.1px;transform:scaleX(0.8015);transform-origin:0 50%;">Message</span>
<span class="t" style="left:695.00px;top:346.83px;font-size:4.12px;line-height:4.94px;color:#4a4a4a;-webkit-text-stroke:0.1px;transform:scaleX(0.9791);transform-origin:0 50%;">Duration / Fetch</span>
<svg style="left:80.70px;top:354.10px;width:5.20px;height:5.20px" viewBox="0 0 5.2 5.2" preserveAspectRatio="none"><circle cx="2.6" cy="2.6" r="2.5" fill="#35a83c"/><path d="M1.3 2.6L2.3 3.7L3.9 1.7" fill="none" stroke="#fff" stroke-width="0.8"/></svg>
<span class="t" style="left:94.90px;top:354.08px;font-size:4.54px;line-height:5.45px;color:#222;-webkit-text-stroke:0.1px;transform:scaleX(0.7525);transform-origin:0 50%;">47</span>
<span class="t" style="left:103.40px;top:354.08px;font-size:4.54px;line-height:5.45px;color:#222;-webkit-text-stroke:0.1px;transform:scaleX(0.8940);transform-origin:0 50%;">18:14:32</span>
<span class="t" style="left:122.60px;top:354.08px;font-size:4.54px;line-height:5.45px;color:#222;-webkit-text-stroke:0.1px;transform:scaleX(0.9087);transform-origin:0 50%;">INSERT INTO musteriler (adi, soyadi, Email, telnumara) VALUES ('clark', 'kent', 'clark@example.com', '1234567890')</span>
<span class="t" style="left:409.00px;top:354.08px;font-size:4.54px;line-height:5.45px;color:#222;-webkit-text-stroke:0.1px;transform:scaleX(0.9013);transform-origin:0 50%;">1 row(s) affected</span>
<span class="t" style="left:695.00px;top:354.08px;font-size:4.54px;line-height:5.45px;color:#222;-webkit-text-stroke:0.1px;transform:scaleX(0.8736);transform-origin:0 50%;">0.015 sec</span>
<div style="left:78.90px;top:360.77px;width:658.20px;height:8.94px;background:#edf2fb;"></div>
<svg style="left:80.70px;top:363.04px;width:5.20px;height:5.20px" viewBox="0 0 5.2 5.2" preserveAspectRatio="none"><circle cx="2.6" cy="2.6" r="2.5" fill="#35a83c"/><path d="M1.3 2.6L2.3 3.7L3.9 1.7" fill="none" stroke="#fff" stroke-width="0.8"/></svg>
<span class="t" style="left:94.90px;top:363.02px;font-size:4.54px;line-height:5.45px;color:#222;-webkit-text-stroke:0.1px;transform:scaleX(0.7525);transform-origin:0 50%;">48</span>
<span class="t" style="left:103.40px;top:363.02px;font-size:4.54px;line-height:5.45px;color:#222;-webkit-text-stroke:0.1px;transform:scaleX(0.8940);transform-origin:0 50%;">18:14:32</span>
<span class="t" style="left:122.60px;top:363.02px;font-size:4.54px;line-height:5.45px;color:#222;-webkit-text-stroke:0.1px;transform:scaleX(0.9041);transform-origin:0 50%;">INSERT INTO musteriler (adi, soyadi, Email, telnumara) VALUES ('carl', 'jhons', 'jhon@example.com', '237564242685')</span>
<span class="t" style="left:409.00px;top:363.02px;font-size:4.54px;line-height:5.45px;color:#222;-webkit-text-stroke:0.1px;transform:scaleX(0.9013);transform-origin:0 50%;">1 row(s) affected</span>
<span class="t" style="left:695.00px;top:363.02px;font-size:4.54px;line-height:5.45px;color:#222;-webkit-text-stroke:0.1px;transform:scaleX(0.8736);transform-origin:0 50%;">0.000 sec</span>
<svg style="left:80.70px;top:371.98px;width:5.20px;height:5.20px" viewBox="0 0 5.2 5.2" preserveAspectRatio="none"><circle cx="2.6" cy="2.6" r="2.5" fill="#35a83c"/><path d="M1.3 2.6L2.3 3.7L3.9 1.7" fill="none" stroke="#fff" stroke-width="0.8"/></svg>
<span class="t" style="left:94.90px;top:371.96px;font-size:4.54px;line-height:5.45px;color:#222;-webkit-text-stroke:0.1px;transform:scaleX(0.7525);transform-origin:0 50%;">49</span>
<span class="t" style="left:103.40px;top:371.96px;font-size:4.54px;line-height:5.45px;color:#222;-webkit-text-stroke:0.1px;transform:scaleX(0.8940);transform-origin:0 50%;">18:14:32</span>
<span class="t" style="left:122.60px;top:371.96px;font-size:4.54px;line-height:5.45px;color:#222;-webkit-text-stroke:0.1px;transform:scaleX(0.8981);transform-origin:0 50%;">INSERT INTO musteriler (adi, soyadi, Email, telnumara) VALUES ('morgan', 'freeman', 'morgan@example.com', '7585636738')</span>
<span class="t" style="left:409.00px;top:371.96px;font-size:4.54px;line-height:5.45px;color:#222;-webkit-text-stroke:0.1px;transform:scaleX(0.9013);transform-origin:0 50%;">1 row(s) affected</span>
<span class="t" style="left:695.00px;top:371.96px;font-size:4.54px;line-height:5.45px;color:#222;-webkit-text-stroke:0.1px;transform:scaleX(0.8736);transform-origin:0 50%;">0.016 sec</span>
<div style="left:78.90px;top:378.65px;width:658.20px;height:8.94px;background:#edf2fb;"></div>
<svg style="left:80.70px;top:380.92px;width:5.20px;height:5.20px" viewBox="0 0 5.2 5.2" preserveAspectRatio="none"><circle cx="2.6" cy="2.6" r="2.5" fill="#35a83c"/><path d="M1.3 2.6L2.3 3.7L3.9 1.7" fill="none" stroke="#fff" stroke-width="0.8"/></svg>
<span class="t" style="left:94.90px;top:380.90px;font-size:4.54px;line-height:5.45px;color:#222;-webkit-text-stroke:0.1px;transform:scaleX(0.7525);transform-origin:0 50%;">50</span>
<span class="t" style="left:103.40px;top:380.90px;font-size:4.54px;line-height:5.45px;color:#222;-webkit-text-stroke:0.1px;transform:scaleX(0.8940);transform-origin:0 50%;">18:14:32</span>
<span class="t" style="left:122.60px;top:380.90px;font-size:4.54px;line-height:5.45px;color:#222;-webkit-text-stroke:0.1px;transform:scaleX(0.9101);transform-origin:0 50%;">INSERT INTO odalar (oda_numara, oda_turu_id) VALUES ('101', '1')</span>
<span class="t" style="left:409.00px;top:380.90px;font-size:4.54px;line-height:5.45px;color:#222;-webkit-text-stroke:0.1px;transform:scaleX(0.9013);transform-origin:0 50%;">1 row(s) affected</span>
<span class="t" style="left:695.00px;top:380.90px;font-size:4.54px;line-height:5.45px;color:#222;-webkit-text-stroke:0.1px;transform:scaleX(0.8736);transform-origin:0 50%;">0.000 sec</span>
<svg style="left:80.70px;top:389.86px;width:5.20px;height:5.20px" viewBox="0 0 5.2 5.2" preserveAspectRatio="none"><circle cx="2.6" cy="2.6" r="2.5" fill="#35a83c"/><path d="M1.3 2.6L2.3 3.7L3.9 1.7" fill="none" stroke="#fff" stroke-width="0.8"/></svg>
<span class="t" style="left:94.90px;top:389.84px;font-size:4.54px;line-height:5.45px;color:#222;-webkit-text-stroke:0.1px;transform:scaleX(0.7525);transform-origin:0 50%;">51</span>
<span class="t" style="left:103.40px;top:389.84px;font-size:4.54px;line-height:5.45px;color:#222;-webkit-text-stroke:0.1px;transform:scaleX(0.8940);transform-origin:0 50%;">18:14:32</span>
<span class="t" style="left:122.60px;top:389.84px;font-size:4.54px;line-height:5.45px;color:#222;-webkit-text-stroke:0.1px;transform:scaleX(0.9101);transform-origin:0 50%;">INSERT INTO odalar (oda_numara, oda_turu_id) VALUES ('104', '2')</span>
<span class="t" style="left:409.00px;top:389.84px;font-size:4.54px;line-height:5.45px;color:#222;-webkit-text-stroke:0.1px;transform:scaleX(0.9013);transform-origin:0 50%;">1 row(s) affected</span>
<span class="t" style="left:695.00px;top:389.84px;font-size:4.54px;line-height:5.45px;color:#222;-webkit-text-stroke:0.1px;transform:scaleX(0.8736);transform-origin:0 50%;">0.016 sec</span>
<div style="left:78.90px;top:396.53px;width:658.20px;height:8.94px;background:#edf2fb;"></div>
<svg style="left:80.70px;top:398.80px;width:5.20px;height:5.20px" viewBox="0 0 5.2 5.2" preserveAspectRatio="none"><circle cx="2.6" cy="2.6" r="2.5" fill="#35a83c"/><path d="M1.3 2.6L2.3 3.7L3.9 1.7" fill="none" stroke="#fff" stroke-width="0.8"/></svg>
<span class="t" style="left:94.90px;top:398.78px;font-size:4.54px;line-height:5.45px;color:#222;-webkit-text-stroke:0.1px;transform:scaleX(0.7525);transform-origin:0 50%;">52</span>
<span class="t" style="left:103.40px;top:398.78px;font-size:4.54px;line-height:5.45px;color:#222;-webkit-text-stroke:0.1px;transform:scaleX(0.8940);transform-origin:0 50%;">18:14:32</span>
<span class="t" style="left:122.60px;top:398.78px;font-size:4.54px;line-height:5.45px;color:#222;-webkit-text-stroke:0.1px;transform:scaleX(0.9101);transform-origin:0 50%;">INSERT INTO odalar (oda_numara, oda_turu_id) VALUES ('105', '3')</span>
<span class="t" style="left:409.00px;top:398.78px;font-size:4.54px;line-height:5.45px;color:#222;-webkit-text-stroke:0.1px;transform:scaleX(0.9013);transform-origin:0 50%;">1 row(s) affected</span>
<span class="t" style="left:695.00px;top:398.78px;font-size:4.54px;line-height:5.45px;color:#222;-webkit-text-stroke:0.1px;transform:scaleX(0.8736);transform-origin:0 50%;">0.000 sec</span>
<svg style="left:80.70px;top:407.74px;width:5.20px;height:5.20px" viewBox="0 0 5.2 5.2" preserveAspectRatio="none"><circle cx="2.6" cy="2.6" r="2.5" fill="#35a83c"/><path d="M1.3 2.6L2.3 3.7L3.9 1.7" fill="none" stroke="#fff" stroke-width="0.8"/></svg>
<span class="t" style="left:94.90px;top:407.72px;font-size:4.54px;line-height:5.45px;color:#222;-webkit-text-stroke:0.1px;transform:scaleX(0.7525);transform-origin:0 50%;">53</span>
<span class="t" style="left:103.40px;top:407.72px;font-size:4.54px;line-height:5.45px;color:#222;-webkit-text-stroke:0.1px;transform:scaleX(0.8940);transform-origin:0 50%;">18:14:32</span>
<span class="t" style="left:122.60px;top:407.72px;font-size:4.54px;line-height:5.45px;color:#222;-webkit-text-stroke:0.1px;transform:scaleX(0.9022);transform-origin:0 50%;">INSERT INTO hizmetler (hizmet_adi, tanim,fiyat) VALUES ('Free Wi-Fi', 'High-speed internet access',14.25)</span>
<span class="t" style="left:409.00px;top:407.72px;font-size:4.54px;line-height:5.45px;color:#222;-webkit-text-stroke:0.1px;transform:scaleX(0.9013);transform-origin:0 50%;">1 row(s) affected</span>
<span class="t" style="left:695.00px;top:407.72px;font-size:4.54px;line-height:5.45px;color:#222;-webkit-text-stroke:0.1px;transform:scaleX(0.8736);transform-origin:0 50%;">0.000 sec</span>
<div style="left:78.90px;top:414.41px;width:658.20px;height:8.94px;background:#edf2fb;"></div>
<svg style="left:80.70px;top:416.68px;width:5.20px;height:5.20px" viewBox="0 0 5.2 5.2" preserveAspectRatio="none"><circle cx="2.6" cy="2.6" r="2.5" fill="#35a83c"/><path d="M1.3 2.6L2.3 3.7L3.9 1.7" fill="none" stroke="#fff" stroke-width="0.8"/></svg>
<span class="t" style="left:94.90px;top:416.66px;font-size:4.54px;line-height:5.45px;color:#222;-webkit-text-stroke:0.1px;transform:scaleX(0.7525);transform-origin:0 50%;">54</span>
<span class="t" style="left:103.40px;top:416.66px;font-size:4.54px;line-height:5.45px;color:#222;-webkit-text-stroke:0.1px;transform:scaleX(0.8940);transform-origin:0 50%;">18:14:32</span>
<span class="t" style="left:122.60px;top:416.66px;font-size:4.54px;line-height:5.45px;color:#222;-webkit-text-stroke:0.1px;transform:scaleX(0.9168);transform-origin:0 50%;">INSERT INTO hizmetler (hizmet_adi, tanim,fiyat) VALUES ('gaming', 'access to the gaming center',10.12)</span>
<span class="t" style="left:409.00px;top:416.66px;font-size:4.54px;line-height:5.45px;color:#222;-webkit-text-stroke:0.1px;transform:scaleX(0.9013);transform-origin:0 50%;">1 row(s) affected</span>
<span class="t" style="left:695.00px;top:416.66px;font-size:4.54px;line-height:5.45px;color:#222;-webkit-text-stroke:0.1px;transform:scaleX(0.8736);transform-origin:0 50%;">0.000 sec</span>
<svg style="left:80.70px;top:425.62px;width:5.20px;height:5.20px" viewBox="0 0 5.2 5.2" preserveAspectRatio="none"><circle cx="2.6" cy="2.6" r="2.5" fill="#35a83c"/><path d="M1.3 2.6L2.3 3.7L3.9 1.7" fill="none" stroke="#fff" stroke-width="0.8"/></svg>
<span class="t" style="left:94.90px;top:425.60px;font-size:4.54px;line-height:5.45px;color:#222;-webkit-text-stroke:0.1px;transform:scaleX(0.7525);transform-origin:0 50%;">55</span>
<span class="t" style="left:103.40px;top:425.60px;font-size:4.54px;line-height:5.45px;color:#222;-webkit-text-stroke:0.1px;transform:scaleX(0.8940);transform-origin:0 50%;">18:14:32</span>
<span class="t" style="left:122.60px;top:425.60px;font-size:4.54px;line-height:5.45px;color:#222;-webkit-text-stroke:0.1px;transform:scaleX(0.8984);transform-origin:0 50%;">INSERT INTO hizmetler (hizmet_adi, tanim,fiyat) VALUES ('bodyguard', 'premission to hire a bodyguard',40.50)</span>
<span class="t" style="left:409.00px;top:425.60px;font-size:4.54px;line-height:5.45px;color:#222;-webkit-text-stroke:0.1px;transform:scaleX(0.9013);transform-origin:0 50%;">1 row(s) affected</span>
<span class="t" style="left:695.00px;top:425.60px;font-size:4.54px;line-height:5.45px;color:#222;-webkit-text-stroke:0.1px;transform:scaleX(0.8736);transform-origin:0 50%;">0.015 sec</span>
<div style="left:737.10px;top:344.80px;width:6.10px;height:92.20px;background:#f6f6f6;"></div>
<div style="left:737.90px;top:417.20px;width:5.10px;height:13.10px;background:#c9c9c9;"></div>
<svg style="left:738.50px;top:346.80px;width:4.00px;height:2.40px" viewBox="0 0 4 2.4" preserveAspectRatio="none"><path d="M0.2 2.2L2 0.4L3.8 2.2" fill="none" stroke="#2a2a2a" stroke-width="0.85"/></svg>
<svg style="left:738.50px;top:433.60px;width:4.00px;height:2.40px" viewBox="0 0 4 2.4" preserveAspectRatio="none"><path d="M0.2 0.3L2 2.1L3.8 0.3" fill="none" stroke="#2a2a2a" stroke-width="0.85"/></svg>
<div style="left:743.20px;top:43.00px;width:2.50px;height:397.00px;background:#f6f6f6;"></div>
<div style="left:78.90px;top:437.50px;width:666.80px;height:2.50px;background:#f6f6f6;"></div>
</div>
</body></html>
